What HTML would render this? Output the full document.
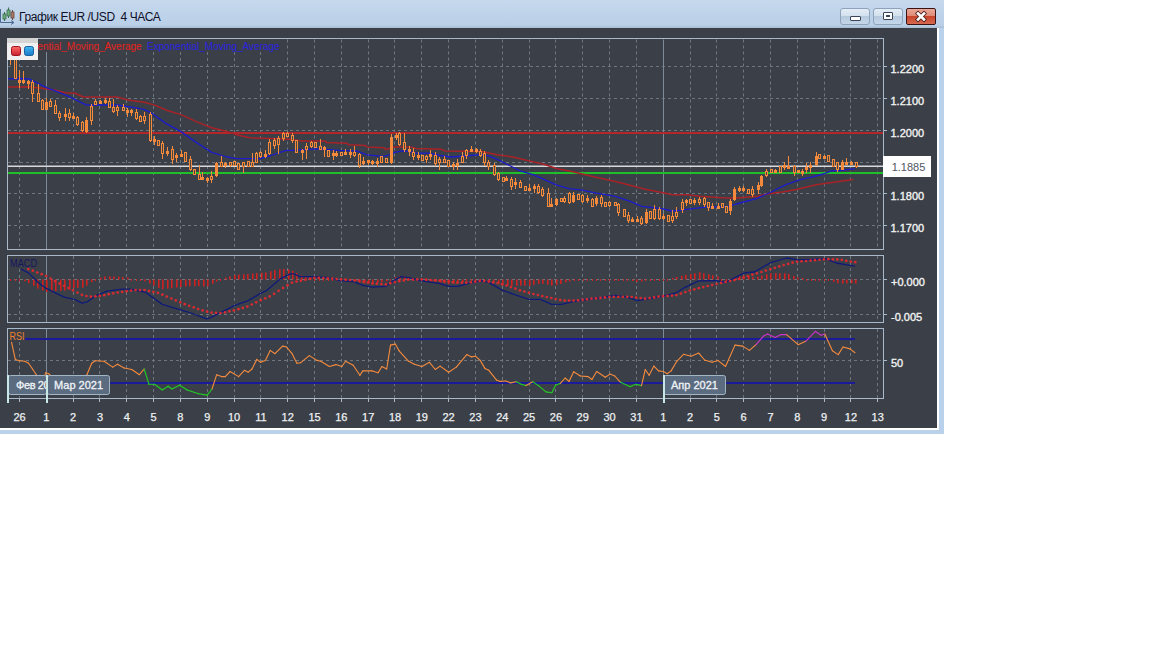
<!DOCTYPE html>
<html><head><meta charset="utf-8">
<style>
html,body{margin:0;padding:0;background:#fff;width:1152px;height:648px;overflow:hidden;font-family:"Liberation Sans",sans-serif;}
#win{position:absolute;left:0;top:0;width:944px;height:434px;background:#b9d1ea;}
#title{position:absolute;left:0;top:0;width:944px;height:28px;background:linear-gradient(#c6d8ec,#b9d0e8 90%,#a9bccf 100%);}
#ttext{position:absolute;left:19px;top:10px;font-size:12px;color:#10102a;white-space:nowrap;letter-spacing:-0.4px;}
#dark{position:absolute;left:0;top:28px;width:937px;height:400px;background:#3b4048;}
#wl{position:absolute;left:937px;top:28px;width:2px;height:402px;background:#fff;}
#bl{position:absolute;left:0;top:428px;width:939px;height:2px;background:#fff;}
.btn{position:absolute;top:8px;width:28px;height:15px;border:1px solid #8ea3ba;border-radius:3px;background:linear-gradient(#e4edf6 0%,#d3e0ee 45%,#b6cadf 50%,#c5d6e8 100%);}
#close{border-color:#3a1414;border-radius:2px;background:linear-gradient(#eaa898 0%,#e08a78 45%,#c9442c 50%,#d66a50 100%);}
svg{position:absolute;left:0;top:0;}
</style></head><body>
<div id="win">
<div id="title">
<svg width="16" height="26" style="left:0;top:0">
<path d="M0.5 9 V22.5 H13" stroke="#4a6a90" stroke-width="1" fill="none"/>
<path d="M11 20.5 L14 22.5 L11 24.5" stroke="#4a6a90" stroke-width="1" fill="none"/>
<line x1="4.5" y1="12" x2="4.5" y2="21" stroke="#3a6a50" stroke-width="1"/><rect x="3" y="14" width="3" height="5" fill="#6cae7a" stroke="#3a6a50" stroke-width="0.8"/>
<line x1="8.5" y1="7.5" x2="8.5" y2="18" stroke="#3a6a50" stroke-width="1"/><rect x="7" y="10" width="3" height="6" fill="#6cae7a" stroke="#3a6a50" stroke-width="0.8"/>
<line x1="12.5" y1="10" x2="12.5" y2="20" stroke="#6a4a40" stroke-width="1"/><rect x="11" y="12" width="3" height="6" fill="#a8786a" stroke="#6a4a40" stroke-width="0.8"/>
</svg>
<div id="ttext">График EUR /USD&nbsp; 4 ЧАСА</div>
<div class="btn" style="left:840px"><div style="position:absolute;left:9px;top:7px;width:9px;height:3px;background:#fff;border:1px solid #3a4658;border-radius:1px"></div></div>
<div class="btn" style="left:873px"><div style="position:absolute;left:9px;top:3px;width:8px;height:6px;background:#fff;border:1px solid #3a4658;border-radius:1px"><div style="position:absolute;left:2px;top:2px;width:4px;height:2px;background:#3a4658"></div></div></div>
<div class="btn" id="close" style="left:906px">
<svg width="28" height="15" style="left:0;top:0"><path d="M11 4.5 L17 10.5 M17 4.5 L11 10.5" stroke="#4a2020" stroke-width="4.2" stroke-linecap="square"/><path d="M11 4.5 L17 10.5 M17 4.5 L11 10.5" stroke="#ffffff" stroke-width="2.6" stroke-linecap="square"/></svg>
</div>
</div>
<div id="dark"></div><div id="wl"></div><div id="bl"></div>
</div>
<svg width="1152" height="648" viewBox="0 0 1152 648" font-family="Liberation Sans, sans-serif">
<line x1="8" y1="66.5" x2="883" y2="66.5" stroke="#6e767f" stroke-width="1" stroke-dasharray="3 3"/>
<line x1="8" y1="98.5" x2="883" y2="98.5" stroke="#6e767f" stroke-width="1" stroke-dasharray="3 3"/>
<line x1="8" y1="130.5" x2="883" y2="130.5" stroke="#6e767f" stroke-width="1" stroke-dasharray="3 3"/>
<line x1="8" y1="162.5" x2="883" y2="162.5" stroke="#6e767f" stroke-width="1" stroke-dasharray="3 3"/>
<line x1="8" y1="193.5" x2="883" y2="193.5" stroke="#6e767f" stroke-width="1" stroke-dasharray="3 3"/>
<line x1="8" y1="225.5" x2="883" y2="225.5" stroke="#6e767f" stroke-width="1" stroke-dasharray="3 3"/>
<line x1="8" y1="279.5" x2="883" y2="279.5" stroke="#6e767f" stroke-width="1" stroke-dasharray="3 3"/>
<line x1="8" y1="314.5" x2="883" y2="314.5" stroke="#6e767f" stroke-width="1" stroke-dasharray="3 3"/>
<line x1="8" y1="360.5" x2="883" y2="360.5" stroke="#6e767f" stroke-width="1" stroke-dasharray="3 3"/>
<line x1="19.5" y1="52" x2="19.5" y2="249.0" stroke="#6e767f" stroke-width="1" stroke-dasharray="3 3"/>
<line x1="19.5" y1="269" x2="19.5" y2="322.0" stroke="#6e767f" stroke-width="1" stroke-dasharray="3 3"/>
<line x1="19.5" y1="342" x2="19.5" y2="398.0" stroke="#6e767f" stroke-width="1" stroke-dasharray="3 3"/>
<line x1="46.5" y1="52" x2="46.5" y2="249.0" stroke="#7d8b99" stroke-width="1"/>
<line x1="46.5" y1="256.0" x2="46.5" y2="322.0" stroke="#7d8b99" stroke-width="1"/>
<line x1="46.5" y1="329.0" x2="46.5" y2="398.0" stroke="#7d8b99" stroke-width="1"/>
<line x1="73.5" y1="52" x2="73.5" y2="249.0" stroke="#6e767f" stroke-width="1" stroke-dasharray="3 3"/>
<line x1="73.5" y1="256.0" x2="73.5" y2="322.0" stroke="#6e767f" stroke-width="1" stroke-dasharray="3 3"/>
<line x1="73.5" y1="329.0" x2="73.5" y2="398.0" stroke="#6e767f" stroke-width="1" stroke-dasharray="3 3"/>
<line x1="99.5" y1="52" x2="99.5" y2="249.0" stroke="#6e767f" stroke-width="1" stroke-dasharray="3 3"/>
<line x1="99.5" y1="256.0" x2="99.5" y2="322.0" stroke="#6e767f" stroke-width="1" stroke-dasharray="3 3"/>
<line x1="99.5" y1="329.0" x2="99.5" y2="398.0" stroke="#6e767f" stroke-width="1" stroke-dasharray="3 3"/>
<line x1="126.5" y1="52" x2="126.5" y2="249.0" stroke="#6e767f" stroke-width="1" stroke-dasharray="3 3"/>
<line x1="126.5" y1="256.0" x2="126.5" y2="322.0" stroke="#6e767f" stroke-width="1" stroke-dasharray="3 3"/>
<line x1="126.5" y1="329.0" x2="126.5" y2="398.0" stroke="#6e767f" stroke-width="1" stroke-dasharray="3 3"/>
<line x1="153.5" y1="52" x2="153.5" y2="249.0" stroke="#6e767f" stroke-width="1" stroke-dasharray="3 3"/>
<line x1="153.5" y1="256.0" x2="153.5" y2="322.0" stroke="#6e767f" stroke-width="1" stroke-dasharray="3 3"/>
<line x1="153.5" y1="329.0" x2="153.5" y2="398.0" stroke="#6e767f" stroke-width="1" stroke-dasharray="3 3"/>
<line x1="180.5" y1="52" x2="180.5" y2="249.0" stroke="#6e767f" stroke-width="1" stroke-dasharray="3 3"/>
<line x1="180.5" y1="256.0" x2="180.5" y2="322.0" stroke="#6e767f" stroke-width="1" stroke-dasharray="3 3"/>
<line x1="180.5" y1="329.0" x2="180.5" y2="398.0" stroke="#6e767f" stroke-width="1" stroke-dasharray="3 3"/>
<line x1="207.5" y1="52" x2="207.5" y2="249.0" stroke="#6e767f" stroke-width="1" stroke-dasharray="3 3"/>
<line x1="207.5" y1="256.0" x2="207.5" y2="322.0" stroke="#6e767f" stroke-width="1" stroke-dasharray="3 3"/>
<line x1="207.5" y1="329.0" x2="207.5" y2="398.0" stroke="#6e767f" stroke-width="1" stroke-dasharray="3 3"/>
<line x1="234.5" y1="52" x2="234.5" y2="249.0" stroke="#6e767f" stroke-width="1" stroke-dasharray="3 3"/>
<line x1="234.5" y1="256.0" x2="234.5" y2="322.0" stroke="#6e767f" stroke-width="1" stroke-dasharray="3 3"/>
<line x1="234.5" y1="329.0" x2="234.5" y2="398.0" stroke="#6e767f" stroke-width="1" stroke-dasharray="3 3"/>
<line x1="260.5" y1="52" x2="260.5" y2="249.0" stroke="#6e767f" stroke-width="1" stroke-dasharray="3 3"/>
<line x1="260.5" y1="256.0" x2="260.5" y2="322.0" stroke="#6e767f" stroke-width="1" stroke-dasharray="3 3"/>
<line x1="260.5" y1="329.0" x2="260.5" y2="398.0" stroke="#6e767f" stroke-width="1" stroke-dasharray="3 3"/>
<line x1="287.5" y1="39.5" x2="287.5" y2="249.0" stroke="#6e767f" stroke-width="1" stroke-dasharray="3 3"/>
<line x1="287.5" y1="256.0" x2="287.5" y2="322.0" stroke="#6e767f" stroke-width="1" stroke-dasharray="3 3"/>
<line x1="287.5" y1="329.0" x2="287.5" y2="398.0" stroke="#6e767f" stroke-width="1" stroke-dasharray="3 3"/>
<line x1="314.5" y1="39.5" x2="314.5" y2="249.0" stroke="#6e767f" stroke-width="1" stroke-dasharray="3 3"/>
<line x1="314.5" y1="256.0" x2="314.5" y2="322.0" stroke="#6e767f" stroke-width="1" stroke-dasharray="3 3"/>
<line x1="314.5" y1="329.0" x2="314.5" y2="398.0" stroke="#6e767f" stroke-width="1" stroke-dasharray="3 3"/>
<line x1="341.5" y1="39.5" x2="341.5" y2="249.0" stroke="#6e767f" stroke-width="1" stroke-dasharray="3 3"/>
<line x1="341.5" y1="256.0" x2="341.5" y2="322.0" stroke="#6e767f" stroke-width="1" stroke-dasharray="3 3"/>
<line x1="341.5" y1="329.0" x2="341.5" y2="398.0" stroke="#6e767f" stroke-width="1" stroke-dasharray="3 3"/>
<line x1="368.5" y1="39.5" x2="368.5" y2="249.0" stroke="#6e767f" stroke-width="1" stroke-dasharray="3 3"/>
<line x1="368.5" y1="256.0" x2="368.5" y2="322.0" stroke="#6e767f" stroke-width="1" stroke-dasharray="3 3"/>
<line x1="368.5" y1="329.0" x2="368.5" y2="398.0" stroke="#6e767f" stroke-width="1" stroke-dasharray="3 3"/>
<line x1="394.5" y1="39.5" x2="394.5" y2="249.0" stroke="#6e767f" stroke-width="1" stroke-dasharray="3 3"/>
<line x1="394.5" y1="256.0" x2="394.5" y2="322.0" stroke="#6e767f" stroke-width="1" stroke-dasharray="3 3"/>
<line x1="394.5" y1="329.0" x2="394.5" y2="398.0" stroke="#6e767f" stroke-width="1" stroke-dasharray="3 3"/>
<line x1="421.5" y1="39.5" x2="421.5" y2="249.0" stroke="#6e767f" stroke-width="1" stroke-dasharray="3 3"/>
<line x1="421.5" y1="256.0" x2="421.5" y2="322.0" stroke="#6e767f" stroke-width="1" stroke-dasharray="3 3"/>
<line x1="421.5" y1="329.0" x2="421.5" y2="398.0" stroke="#6e767f" stroke-width="1" stroke-dasharray="3 3"/>
<line x1="448.5" y1="39.5" x2="448.5" y2="249.0" stroke="#6e767f" stroke-width="1" stroke-dasharray="3 3"/>
<line x1="448.5" y1="256.0" x2="448.5" y2="322.0" stroke="#6e767f" stroke-width="1" stroke-dasharray="3 3"/>
<line x1="448.5" y1="329.0" x2="448.5" y2="398.0" stroke="#6e767f" stroke-width="1" stroke-dasharray="3 3"/>
<line x1="475.5" y1="39.5" x2="475.5" y2="249.0" stroke="#6e767f" stroke-width="1" stroke-dasharray="3 3"/>
<line x1="475.5" y1="256.0" x2="475.5" y2="322.0" stroke="#6e767f" stroke-width="1" stroke-dasharray="3 3"/>
<line x1="475.5" y1="329.0" x2="475.5" y2="398.0" stroke="#6e767f" stroke-width="1" stroke-dasharray="3 3"/>
<line x1="502.5" y1="39.5" x2="502.5" y2="249.0" stroke="#6e767f" stroke-width="1" stroke-dasharray="3 3"/>
<line x1="502.5" y1="256.0" x2="502.5" y2="322.0" stroke="#6e767f" stroke-width="1" stroke-dasharray="3 3"/>
<line x1="502.5" y1="329.0" x2="502.5" y2="398.0" stroke="#6e767f" stroke-width="1" stroke-dasharray="3 3"/>
<line x1="529.5" y1="39.5" x2="529.5" y2="249.0" stroke="#6e767f" stroke-width="1" stroke-dasharray="3 3"/>
<line x1="529.5" y1="256.0" x2="529.5" y2="322.0" stroke="#6e767f" stroke-width="1" stroke-dasharray="3 3"/>
<line x1="529.5" y1="329.0" x2="529.5" y2="398.0" stroke="#6e767f" stroke-width="1" stroke-dasharray="3 3"/>
<line x1="555.5" y1="39.5" x2="555.5" y2="249.0" stroke="#6e767f" stroke-width="1" stroke-dasharray="3 3"/>
<line x1="555.5" y1="256.0" x2="555.5" y2="322.0" stroke="#6e767f" stroke-width="1" stroke-dasharray="3 3"/>
<line x1="555.5" y1="329.0" x2="555.5" y2="398.0" stroke="#6e767f" stroke-width="1" stroke-dasharray="3 3"/>
<line x1="582.5" y1="39.5" x2="582.5" y2="249.0" stroke="#6e767f" stroke-width="1" stroke-dasharray="3 3"/>
<line x1="582.5" y1="256.0" x2="582.5" y2="322.0" stroke="#6e767f" stroke-width="1" stroke-dasharray="3 3"/>
<line x1="582.5" y1="329.0" x2="582.5" y2="398.0" stroke="#6e767f" stroke-width="1" stroke-dasharray="3 3"/>
<line x1="609.5" y1="39.5" x2="609.5" y2="249.0" stroke="#6e767f" stroke-width="1" stroke-dasharray="3 3"/>
<line x1="609.5" y1="256.0" x2="609.5" y2="322.0" stroke="#6e767f" stroke-width="1" stroke-dasharray="3 3"/>
<line x1="609.5" y1="329.0" x2="609.5" y2="398.0" stroke="#6e767f" stroke-width="1" stroke-dasharray="3 3"/>
<line x1="636.5" y1="39.5" x2="636.5" y2="249.0" stroke="#6e767f" stroke-width="1" stroke-dasharray="3 3"/>
<line x1="636.5" y1="256.0" x2="636.5" y2="322.0" stroke="#6e767f" stroke-width="1" stroke-dasharray="3 3"/>
<line x1="636.5" y1="329.0" x2="636.5" y2="398.0" stroke="#6e767f" stroke-width="1" stroke-dasharray="3 3"/>
<line x1="663.5" y1="39.5" x2="663.5" y2="249.0" stroke="#7d8b99" stroke-width="1"/>
<line x1="663.5" y1="256.0" x2="663.5" y2="322.0" stroke="#7d8b99" stroke-width="1"/>
<line x1="663.5" y1="329.0" x2="663.5" y2="398.0" stroke="#7d8b99" stroke-width="1"/>
<line x1="690.5" y1="39.5" x2="690.5" y2="249.0" stroke="#6e767f" stroke-width="1" stroke-dasharray="3 3"/>
<line x1="690.5" y1="256.0" x2="690.5" y2="322.0" stroke="#6e767f" stroke-width="1" stroke-dasharray="3 3"/>
<line x1="690.5" y1="329.0" x2="690.5" y2="398.0" stroke="#6e767f" stroke-width="1" stroke-dasharray="3 3"/>
<line x1="716.5" y1="39.5" x2="716.5" y2="249.0" stroke="#6e767f" stroke-width="1" stroke-dasharray="3 3"/>
<line x1="716.5" y1="256.0" x2="716.5" y2="322.0" stroke="#6e767f" stroke-width="1" stroke-dasharray="3 3"/>
<line x1="716.5" y1="329.0" x2="716.5" y2="398.0" stroke="#6e767f" stroke-width="1" stroke-dasharray="3 3"/>
<line x1="743.5" y1="39.5" x2="743.5" y2="249.0" stroke="#6e767f" stroke-width="1" stroke-dasharray="3 3"/>
<line x1="743.5" y1="256.0" x2="743.5" y2="322.0" stroke="#6e767f" stroke-width="1" stroke-dasharray="3 3"/>
<line x1="743.5" y1="329.0" x2="743.5" y2="398.0" stroke="#6e767f" stroke-width="1" stroke-dasharray="3 3"/>
<line x1="770.5" y1="39.5" x2="770.5" y2="249.0" stroke="#6e767f" stroke-width="1" stroke-dasharray="3 3"/>
<line x1="770.5" y1="256.0" x2="770.5" y2="322.0" stroke="#6e767f" stroke-width="1" stroke-dasharray="3 3"/>
<line x1="770.5" y1="329.0" x2="770.5" y2="398.0" stroke="#6e767f" stroke-width="1" stroke-dasharray="3 3"/>
<line x1="797.5" y1="39.5" x2="797.5" y2="249.0" stroke="#6e767f" stroke-width="1" stroke-dasharray="3 3"/>
<line x1="797.5" y1="256.0" x2="797.5" y2="322.0" stroke="#6e767f" stroke-width="1" stroke-dasharray="3 3"/>
<line x1="797.5" y1="329.0" x2="797.5" y2="398.0" stroke="#6e767f" stroke-width="1" stroke-dasharray="3 3"/>
<line x1="824.5" y1="39.5" x2="824.5" y2="249.0" stroke="#6e767f" stroke-width="1" stroke-dasharray="3 3"/>
<line x1="824.5" y1="256.0" x2="824.5" y2="322.0" stroke="#6e767f" stroke-width="1" stroke-dasharray="3 3"/>
<line x1="824.5" y1="329.0" x2="824.5" y2="398.0" stroke="#6e767f" stroke-width="1" stroke-dasharray="3 3"/>
<line x1="850.5" y1="39.5" x2="850.5" y2="249.0" stroke="#6e767f" stroke-width="1" stroke-dasharray="3 3"/>
<line x1="850.5" y1="256.0" x2="850.5" y2="322.0" stroke="#6e767f" stroke-width="1" stroke-dasharray="3 3"/>
<line x1="850.5" y1="329.0" x2="850.5" y2="398.0" stroke="#6e767f" stroke-width="1" stroke-dasharray="3 3"/>
<line x1="877.5" y1="39.5" x2="877.5" y2="249.0" stroke="#6e767f" stroke-width="1" stroke-dasharray="3 3"/>
<line x1="877.5" y1="256.0" x2="877.5" y2="322.0" stroke="#6e767f" stroke-width="1" stroke-dasharray="3 3"/>
<line x1="877.5" y1="329.0" x2="877.5" y2="398.0" stroke="#6e767f" stroke-width="1" stroke-dasharray="3 3"/>
<rect x="8" y="132" width="875" height="2" fill="#b3262a"/>
<rect x="8" y="165.5" width="875" height="1.5" fill="#d8d8d8"/>
<rect x="8" y="172" width="875" height="2" fill="#1fbf2a"/>
<polyline points="8.0,87.1 29.0,86.8 41.7,88.3 55.4,90.2 65.3,92.7 75.0,93.3 83.3,97.0 95.8,97.0 116.7,97.0 129.4,100.2 144.2,102.2 154.0,104.9 166.7,110.2 180.9,114.6 196.3,121.6 211.7,127.7 227.2,131.6 239.5,135.5 250.0,137.8 270.9,138.5 289.4,139.3 301.7,140.9 324.9,140.9 326.4,142.4 347.0,143.2 348.5,144.7 365.5,145.5 367.0,147.0 384.0,147.8 385.6,149.4 394.8,147.0 410.2,147.0 416.4,148.6 441.6,149.3 444.7,150.9 481.7,151.6 497.2,154.7 512.6,157.0 525.4,160.0 545.5,164.7 556.3,168.5 571.7,171.6 582.5,174.0 594.9,177.0 615.4,181.6 630.9,185.5 646.3,189.4 661.7,192.4 672.5,194.8 686.4,194.8 700.0,196.3 725.5,197.9 736.3,197.9 757.9,196.3 767.2,194.0 782.6,192.0 796.2,189.4 816.3,184.8 831.7,182.5 853.3,179.4" fill="none" stroke="#a82228" stroke-width="1.5" stroke-linejoin="round" />
<polyline points="8.0,78.8 19.0,78.5 29.0,78.8 46.7,87.7 61.5,93.3 74.0,98.8 80.0,101.9 86.2,104.9 96.0,105.0 117.0,105.0 133.0,107.4 144.0,109.3 150.4,112.3 165.4,123.1 180.9,131.6 196.3,142.4 211.7,152.4 227.2,157.0 236.4,158.6 260.0,158.6 270.9,155.5 286.3,150.4 292.5,150.4 317.2,148.9 340.0,150.4 356.2,150.9 367.0,154.8 384.0,156.3 391.7,154.0 394.8,152.4 402.5,150.9 410.2,151.7 416.4,153.2 429.3,153.2 440.0,155.5 450.9,157.0 470.9,155.5 481.7,154.7 489.4,156.2 497.2,159.4 509.5,165.5 520.0,170.9 533.1,174.7 545.5,180.1 556.3,184.8 568.6,188.6 582.5,190.2 596.4,193.2 615.4,196.3 630.9,201.7 641.7,206.3 661.7,208.6 672.5,211.0 681.8,210.2 692.6,208.6 705.4,207.1 728.6,206.4 736.3,204.0 756.4,198.6 770.2,192.5 785.4,184.8 800.9,179.4 811.7,177.1 823.2,174.0 831.7,170.9 844.0,170.1 855.0,168.6" fill="none" stroke="#1c1ccc" stroke-width="1.3" stroke-linejoin="round" />
<rect x="7" y="55" width="1" height="9" fill="#f58a3d"/>
<rect x="10" y="55" width="1" height="10" fill="#f58a3d"/>
<rect x="15" y="50" width="1" height="29" fill="#f58a3d"/>
<rect x="14" y="55" width="3" height="24" fill="#f58a3d"/>
<rect x="15" y="56" width="1" height="22" fill="#4a4640"/>
<rect x="19" y="70" width="1" height="18" fill="#f58a3d"/>
<rect x="18" y="80" width="3" height="3" fill="#f58a3d"/>
<rect x="23" y="71" width="1" height="13" fill="#f58a3d"/>
<rect x="22" y="80" width="3" height="3" fill="#f58a3d"/>
<rect x="28" y="80" width="1" height="9" fill="#f58a3d"/>
<rect x="27" y="81" width="3" height="3" fill="#f58a3d"/>
<rect x="32" y="80" width="1" height="22" fill="#f58a3d"/>
<rect x="31" y="82" width="3" height="12" fill="#f58a3d"/>
<rect x="32" y="83" width="1" height="10" fill="#4a4640"/>
<rect x="38" y="84" width="1" height="18" fill="#f58a3d"/>
<rect x="37" y="93" width="3" height="9" fill="#f58a3d"/>
<rect x="38" y="94" width="1" height="7" fill="#4a4640"/>
<rect x="42" y="99" width="1" height="11" fill="#f58a3d"/>
<rect x="41" y="100" width="3" height="10" fill="#f58a3d"/>
<rect x="42" y="101" width="1" height="8" fill="#4a4640"/>
<rect x="46" y="98" width="1" height="12" fill="#f58a3d"/>
<rect x="45" y="102" width="3" height="8" fill="#f58a3d"/>
<rect x="50" y="99" width="1" height="8" fill="#f58a3d"/>
<rect x="49" y="101" width="3" height="6" fill="#f58a3d"/>
<rect x="50" y="102" width="1" height="4" fill="#4a4640"/>
<rect x="55" y="100" width="1" height="14" fill="#f58a3d"/>
<rect x="54" y="105" width="3" height="9" fill="#f58a3d"/>
<rect x="55" y="106" width="1" height="7" fill="#4a4640"/>
<rect x="59" y="111" width="1" height="10" fill="#f58a3d"/>
<rect x="58" y="113" width="3" height="5" fill="#f58a3d"/>
<rect x="59" y="114" width="1" height="3" fill="#4a4640"/>
<rect x="65" y="108" width="1" height="13" fill="#f58a3d"/>
<rect x="64" y="114" width="3" height="3" fill="#f58a3d"/>
<rect x="69" y="109" width="1" height="12" fill="#f58a3d"/>
<rect x="68" y="113" width="3" height="5" fill="#f58a3d"/>
<rect x="69" y="114" width="1" height="3" fill="#4a4640"/>
<rect x="73" y="113" width="1" height="6" fill="#f58a3d"/>
<rect x="72" y="116" width="3" height="3" fill="#f58a3d"/>
<rect x="77" y="116" width="1" height="10" fill="#f58a3d"/>
<rect x="76" y="117" width="3" height="8" fill="#f58a3d"/>
<rect x="77" y="118" width="1" height="6" fill="#4a4640"/>
<rect x="82" y="121" width="1" height="11" fill="#f58a3d"/>
<rect x="81" y="122" width="3" height="9" fill="#f58a3d"/>
<rect x="82" y="123" width="1" height="7" fill="#4a4640"/>
<rect x="86" y="117" width="1" height="16" fill="#f58a3d"/>
<rect x="85" y="120" width="3" height="12" fill="#f58a3d"/>
<rect x="91" y="104" width="1" height="21" fill="#f58a3d"/>
<rect x="90" y="106" width="3" height="15" fill="#f58a3d"/>
<rect x="91" y="107" width="1" height="13" fill="#4a4640"/>
<rect x="95" y="99" width="1" height="6" fill="#f58a3d"/>
<rect x="94" y="101" width="3" height="4" fill="#f58a3d"/>
<rect x="95" y="102" width="1" height="2" fill="#4a4640"/>
<rect x="100" y="100" width="1" height="4" fill="#f58a3d"/>
<rect x="99" y="101" width="3" height="3" fill="#f58a3d"/>
<rect x="105" y="98" width="1" height="6" fill="#f58a3d"/>
<rect x="104" y="100" width="3" height="3" fill="#f58a3d"/>
<rect x="109" y="98" width="1" height="10" fill="#f58a3d"/>
<rect x="108" y="101" width="3" height="7" fill="#f58a3d"/>
<rect x="109" y="102" width="1" height="5" fill="#4a4640"/>
<rect x="113" y="99" width="1" height="14" fill="#f58a3d"/>
<rect x="112" y="107" width="3" height="5" fill="#f58a3d"/>
<rect x="113" y="108" width="1" height="3" fill="#4a4640"/>
<rect x="117" y="105" width="1" height="11" fill="#f58a3d"/>
<rect x="116" y="107" width="3" height="4" fill="#f58a3d"/>
<rect x="117" y="108" width="1" height="2" fill="#4a4640"/>
<rect x="123" y="104" width="1" height="7" fill="#f58a3d"/>
<rect x="122" y="107" width="3" height="4" fill="#f58a3d"/>
<rect x="123" y="108" width="1" height="2" fill="#4a4640"/>
<rect x="127" y="108" width="1" height="9" fill="#f58a3d"/>
<rect x="126" y="110" width="3" height="3" fill="#f58a3d"/>
<rect x="131" y="109" width="1" height="7" fill="#f58a3d"/>
<rect x="130" y="110" width="3" height="3" fill="#f58a3d"/>
<rect x="136" y="109" width="1" height="11" fill="#f58a3d"/>
<rect x="135" y="112" width="3" height="7" fill="#f58a3d"/>
<rect x="136" y="113" width="1" height="5" fill="#4a4640"/>
<rect x="140" y="115" width="1" height="7" fill="#f58a3d"/>
<rect x="139" y="116" width="3" height="6" fill="#f58a3d"/>
<rect x="140" y="117" width="1" height="4" fill="#4a4640"/>
<rect x="144" y="112" width="1" height="12" fill="#f58a3d"/>
<rect x="143" y="116" width="3" height="5" fill="#f58a3d"/>
<rect x="144" y="117" width="1" height="3" fill="#4a4640"/>
<rect x="150" y="112" width="1" height="30" fill="#f58a3d"/>
<rect x="149" y="114" width="3" height="27" fill="#f58a3d"/>
<rect x="150" y="115" width="1" height="25" fill="#4a4640"/>
<rect x="154" y="136" width="1" height="9" fill="#f58a3d"/>
<rect x="153" y="139" width="3" height="3" fill="#f58a3d"/>
<rect x="158" y="140" width="1" height="6" fill="#f58a3d"/>
<rect x="157" y="140" width="3" height="6" fill="#f58a3d"/>
<rect x="158" y="141" width="1" height="4" fill="#4a4640"/>
<rect x="162" y="141" width="1" height="18" fill="#f58a3d"/>
<rect x="161" y="143" width="3" height="11" fill="#f58a3d"/>
<rect x="162" y="144" width="1" height="9" fill="#4a4640"/>
<rect x="167" y="147" width="1" height="9" fill="#f58a3d"/>
<rect x="166" y="151" width="3" height="3" fill="#f58a3d"/>
<rect x="172" y="146" width="1" height="18" fill="#f58a3d"/>
<rect x="171" y="149" width="3" height="11" fill="#f58a3d"/>
<rect x="172" y="150" width="1" height="9" fill="#4a4640"/>
<rect x="176" y="153" width="1" height="9" fill="#f58a3d"/>
<rect x="175" y="155" width="3" height="3" fill="#f58a3d"/>
<rect x="181" y="150" width="1" height="7" fill="#f58a3d"/>
<rect x="180" y="154" width="3" height="3" fill="#f58a3d"/>
<rect x="185" y="152" width="1" height="10" fill="#f58a3d"/>
<rect x="184" y="152" width="3" height="10" fill="#f58a3d"/>
<rect x="185" y="153" width="1" height="8" fill="#4a4640"/>
<rect x="190" y="156" width="1" height="15" fill="#f58a3d"/>
<rect x="189" y="159" width="3" height="11" fill="#f58a3d"/>
<rect x="190" y="160" width="1" height="9" fill="#4a4640"/>
<rect x="194" y="169" width="1" height="6" fill="#f58a3d"/>
<rect x="193" y="169" width="3" height="6" fill="#f58a3d"/>
<rect x="194" y="170" width="1" height="4" fill="#4a4640"/>
<rect x="199" y="165" width="1" height="15" fill="#f58a3d"/>
<rect x="198" y="174" width="3" height="6" fill="#f58a3d"/>
<rect x="199" y="175" width="1" height="4" fill="#4a4640"/>
<rect x="202" y="172" width="1" height="8" fill="#f58a3d"/>
<rect x="201" y="177" width="3" height="3" fill="#f58a3d"/>
<rect x="207" y="177" width="1" height="6" fill="#f58a3d"/>
<rect x="206" y="178" width="3" height="3" fill="#f58a3d"/>
<rect x="211" y="171" width="1" height="12" fill="#f58a3d"/>
<rect x="210" y="176" width="3" height="4" fill="#f58a3d"/>
<rect x="211" y="177" width="1" height="2" fill="#4a4640"/>
<rect x="216" y="162" width="1" height="15" fill="#f58a3d"/>
<rect x="215" y="163" width="3" height="13" fill="#f58a3d"/>
<rect x="221" y="156" width="1" height="11" fill="#f58a3d"/>
<rect x="220" y="162" width="3" height="5" fill="#f58a3d"/>
<rect x="221" y="163" width="1" height="3" fill="#4a4640"/>
<rect x="225" y="162" width="1" height="6" fill="#f58a3d"/>
<rect x="224" y="163" width="3" height="3" fill="#f58a3d"/>
<rect x="230" y="162" width="1" height="5" fill="#f58a3d"/>
<rect x="229" y="162" width="3" height="4" fill="#f58a3d"/>
<rect x="230" y="163" width="1" height="2" fill="#4a4640"/>
<rect x="234" y="161" width="1" height="5" fill="#f58a3d"/>
<rect x="233" y="161" width="3" height="5" fill="#f58a3d"/>
<rect x="234" y="162" width="1" height="3" fill="#4a4640"/>
<rect x="238" y="163" width="1" height="7" fill="#f58a3d"/>
<rect x="237" y="163" width="3" height="7" fill="#f58a3d"/>
<rect x="238" y="164" width="1" height="5" fill="#4a4640"/>
<rect x="243" y="162" width="1" height="11" fill="#f58a3d"/>
<rect x="242" y="162" width="3" height="5" fill="#f58a3d"/>
<rect x="243" y="163" width="1" height="3" fill="#4a4640"/>
<rect x="248" y="161" width="1" height="6" fill="#f58a3d"/>
<rect x="247" y="161" width="3" height="6" fill="#f58a3d"/>
<rect x="248" y="162" width="1" height="4" fill="#4a4640"/>
<rect x="252" y="153" width="1" height="14" fill="#f58a3d"/>
<rect x="251" y="162" width="3" height="5" fill="#f58a3d"/>
<rect x="252" y="163" width="1" height="3" fill="#4a4640"/>
<rect x="256" y="152" width="1" height="11" fill="#f58a3d"/>
<rect x="255" y="153" width="3" height="10" fill="#f58a3d"/>
<rect x="256" y="154" width="1" height="8" fill="#4a4640"/>
<rect x="260" y="151" width="1" height="7" fill="#f58a3d"/>
<rect x="259" y="152" width="3" height="5" fill="#f58a3d"/>
<rect x="260" y="153" width="1" height="3" fill="#4a4640"/>
<rect x="265" y="150" width="1" height="8" fill="#f58a3d"/>
<rect x="264" y="154" width="3" height="3" fill="#f58a3d"/>
<rect x="269" y="139" width="1" height="16" fill="#f58a3d"/>
<rect x="268" y="142" width="3" height="12" fill="#f58a3d"/>
<rect x="269" y="143" width="1" height="10" fill="#4a4640"/>
<rect x="274" y="138" width="1" height="11" fill="#f58a3d"/>
<rect x="273" y="140" width="3" height="6" fill="#f58a3d"/>
<rect x="274" y="141" width="1" height="4" fill="#4a4640"/>
<rect x="278" y="136" width="1" height="18" fill="#f58a3d"/>
<rect x="277" y="138" width="3" height="7" fill="#f58a3d"/>
<rect x="278" y="139" width="1" height="5" fill="#4a4640"/>
<rect x="283" y="132" width="1" height="9" fill="#f58a3d"/>
<rect x="282" y="133" width="3" height="6" fill="#f58a3d"/>
<rect x="283" y="134" width="1" height="4" fill="#4a4640"/>
<rect x="287" y="132" width="1" height="5" fill="#f58a3d"/>
<rect x="286" y="133" width="3" height="4" fill="#f58a3d"/>
<rect x="287" y="134" width="1" height="2" fill="#4a4640"/>
<rect x="292" y="133" width="1" height="10" fill="#f58a3d"/>
<rect x="291" y="135" width="3" height="6" fill="#f58a3d"/>
<rect x="292" y="136" width="1" height="4" fill="#4a4640"/>
<rect x="296" y="140" width="1" height="13" fill="#f58a3d"/>
<rect x="295" y="140" width="3" height="13" fill="#f58a3d"/>
<rect x="296" y="141" width="1" height="11" fill="#4a4640"/>
<rect x="302" y="149" width="1" height="11" fill="#f58a3d"/>
<rect x="301" y="150" width="3" height="3" fill="#f58a3d"/>
<rect x="306" y="143" width="1" height="16" fill="#f58a3d"/>
<rect x="305" y="146" width="3" height="4" fill="#f58a3d"/>
<rect x="306" y="147" width="1" height="2" fill="#4a4640"/>
<rect x="311" y="141" width="1" height="7" fill="#f58a3d"/>
<rect x="310" y="142" width="3" height="5" fill="#f58a3d"/>
<rect x="311" y="143" width="1" height="3" fill="#4a4640"/>
<rect x="315" y="142" width="1" height="6" fill="#f58a3d"/>
<rect x="314" y="142" width="3" height="6" fill="#f58a3d"/>
<rect x="315" y="143" width="1" height="4" fill="#4a4640"/>
<rect x="320" y="139" width="1" height="11" fill="#f58a3d"/>
<rect x="319" y="146" width="3" height="4" fill="#f58a3d"/>
<rect x="320" y="147" width="1" height="2" fill="#4a4640"/>
<rect x="324" y="146" width="1" height="11" fill="#f58a3d"/>
<rect x="323" y="147" width="3" height="3" fill="#f58a3d"/>
<rect x="328" y="150" width="1" height="7" fill="#f58a3d"/>
<rect x="327" y="150" width="3" height="7" fill="#f58a3d"/>
<rect x="328" y="151" width="1" height="5" fill="#4a4640"/>
<rect x="333" y="150" width="1" height="10" fill="#f58a3d"/>
<rect x="332" y="153" width="3" height="3" fill="#f58a3d"/>
<rect x="336" y="151" width="1" height="6" fill="#f58a3d"/>
<rect x="335" y="153" width="3" height="3" fill="#f58a3d"/>
<rect x="341" y="152" width="1" height="4" fill="#f58a3d"/>
<rect x="340" y="152" width="3" height="4" fill="#f58a3d"/>
<rect x="341" y="153" width="1" height="2" fill="#4a4640"/>
<rect x="345" y="149" width="1" height="6" fill="#f58a3d"/>
<rect x="344" y="152" width="3" height="3" fill="#f58a3d"/>
<rect x="350" y="149" width="1" height="9" fill="#f58a3d"/>
<rect x="349" y="152" width="3" height="3" fill="#f58a3d"/>
<rect x="354" y="146" width="1" height="11" fill="#f58a3d"/>
<rect x="353" y="152" width="3" height="4" fill="#f58a3d"/>
<rect x="354" y="153" width="1" height="2" fill="#4a4640"/>
<rect x="359" y="153" width="1" height="15" fill="#f58a3d"/>
<rect x="358" y="154" width="3" height="12" fill="#f58a3d"/>
<rect x="359" y="155" width="1" height="10" fill="#4a4640"/>
<rect x="363" y="157" width="1" height="8" fill="#f58a3d"/>
<rect x="362" y="161" width="3" height="3" fill="#f58a3d"/>
<rect x="368" y="160" width="1" height="5" fill="#f58a3d"/>
<rect x="367" y="160" width="3" height="3" fill="#f58a3d"/>
<rect x="372" y="160" width="1" height="5" fill="#f58a3d"/>
<rect x="371" y="161" width="3" height="3" fill="#f58a3d"/>
<rect x="377" y="158" width="1" height="9" fill="#f58a3d"/>
<rect x="376" y="161" width="3" height="3" fill="#f58a3d"/>
<rect x="381" y="156" width="1" height="7" fill="#f58a3d"/>
<rect x="380" y="156" width="3" height="7" fill="#f58a3d"/>
<rect x="381" y="157" width="1" height="5" fill="#4a4640"/>
<rect x="386" y="158" width="1" height="5" fill="#f58a3d"/>
<rect x="385" y="158" width="3" height="5" fill="#f58a3d"/>
<rect x="386" y="159" width="1" height="3" fill="#4a4640"/>
<rect x="391" y="134" width="1" height="30" fill="#f58a3d"/>
<rect x="390" y="137" width="3" height="26" fill="#f58a3d"/>
<rect x="396" y="133" width="1" height="7" fill="#f58a3d"/>
<rect x="395" y="135" width="3" height="3" fill="#f58a3d"/>
<rect x="399" y="132" width="1" height="14" fill="#f58a3d"/>
<rect x="398" y="133" width="3" height="12" fill="#f58a3d"/>
<rect x="399" y="134" width="1" height="10" fill="#4a4640"/>
<rect x="404" y="133" width="1" height="19" fill="#f58a3d"/>
<rect x="403" y="142" width="3" height="8" fill="#f58a3d"/>
<rect x="404" y="143" width="1" height="6" fill="#4a4640"/>
<rect x="409" y="146" width="1" height="10" fill="#f58a3d"/>
<rect x="408" y="149" width="3" height="3" fill="#f58a3d"/>
<rect x="413" y="148" width="1" height="12" fill="#f58a3d"/>
<rect x="412" y="152" width="3" height="5" fill="#f58a3d"/>
<rect x="413" y="153" width="1" height="3" fill="#4a4640"/>
<rect x="418" y="152" width="1" height="8" fill="#f58a3d"/>
<rect x="417" y="155" width="3" height="3" fill="#f58a3d"/>
<rect x="422" y="155" width="1" height="6" fill="#f58a3d"/>
<rect x="421" y="155" width="3" height="6" fill="#f58a3d"/>
<rect x="422" y="156" width="1" height="4" fill="#4a4640"/>
<rect x="426" y="155" width="1" height="8" fill="#f58a3d"/>
<rect x="425" y="156" width="3" height="4" fill="#f58a3d"/>
<rect x="426" y="157" width="1" height="2" fill="#4a4640"/>
<rect x="430" y="150" width="1" height="10" fill="#f58a3d"/>
<rect x="429" y="154" width="3" height="3" fill="#f58a3d"/>
<rect x="435" y="152" width="1" height="14" fill="#f58a3d"/>
<rect x="434" y="155" width="3" height="9" fill="#f58a3d"/>
<rect x="435" y="156" width="1" height="7" fill="#4a4640"/>
<rect x="439" y="157" width="1" height="13" fill="#f58a3d"/>
<rect x="438" y="159" width="3" height="4" fill="#f58a3d"/>
<rect x="439" y="160" width="1" height="2" fill="#4a4640"/>
<rect x="444" y="156" width="1" height="7" fill="#f58a3d"/>
<rect x="443" y="159" width="3" height="4" fill="#f58a3d"/>
<rect x="444" y="160" width="1" height="2" fill="#4a4640"/>
<rect x="448" y="160" width="1" height="7" fill="#f58a3d"/>
<rect x="447" y="160" width="3" height="7" fill="#f58a3d"/>
<rect x="448" y="161" width="1" height="5" fill="#4a4640"/>
<rect x="453" y="162" width="1" height="8" fill="#f58a3d"/>
<rect x="452" y="164" width="3" height="3" fill="#f58a3d"/>
<rect x="457" y="159" width="1" height="11" fill="#f58a3d"/>
<rect x="456" y="163" width="3" height="3" fill="#f58a3d"/>
<rect x="462" y="152" width="1" height="11" fill="#f58a3d"/>
<rect x="461" y="156" width="3" height="7" fill="#f58a3d"/>
<rect x="462" y="157" width="1" height="5" fill="#4a4640"/>
<rect x="466" y="149" width="1" height="10" fill="#f58a3d"/>
<rect x="465" y="150" width="3" height="6" fill="#f58a3d"/>
<rect x="466" y="151" width="1" height="4" fill="#4a4640"/>
<rect x="471" y="146" width="1" height="5" fill="#f58a3d"/>
<rect x="470" y="149" width="3" height="3" fill="#f58a3d"/>
<rect x="476" y="148" width="1" height="5" fill="#f58a3d"/>
<rect x="475" y="149" width="3" height="3" fill="#f58a3d"/>
<rect x="480" y="149" width="1" height="8" fill="#f58a3d"/>
<rect x="479" y="151" width="3" height="5" fill="#f58a3d"/>
<rect x="480" y="152" width="1" height="3" fill="#4a4640"/>
<rect x="484" y="151" width="1" height="15" fill="#f58a3d"/>
<rect x="483" y="153" width="3" height="10" fill="#f58a3d"/>
<rect x="484" y="154" width="1" height="8" fill="#4a4640"/>
<rect x="488" y="160" width="1" height="10" fill="#f58a3d"/>
<rect x="487" y="162" width="3" height="5" fill="#f58a3d"/>
<rect x="488" y="163" width="1" height="3" fill="#4a4640"/>
<rect x="494" y="163" width="1" height="13" fill="#f58a3d"/>
<rect x="493" y="165" width="3" height="10" fill="#f58a3d"/>
<rect x="494" y="166" width="1" height="8" fill="#4a4640"/>
<rect x="498" y="172" width="1" height="9" fill="#f58a3d"/>
<rect x="497" y="173" width="3" height="7" fill="#f58a3d"/>
<rect x="498" y="174" width="1" height="5" fill="#4a4640"/>
<rect x="503" y="177" width="1" height="5" fill="#f58a3d"/>
<rect x="502" y="177" width="3" height="5" fill="#f58a3d"/>
<rect x="503" y="178" width="1" height="3" fill="#4a4640"/>
<rect x="506" y="176" width="1" height="5" fill="#f58a3d"/>
<rect x="505" y="178" width="3" height="3" fill="#f58a3d"/>
<rect x="511" y="177" width="1" height="13" fill="#f58a3d"/>
<rect x="510" y="179" width="3" height="8" fill="#f58a3d"/>
<rect x="511" y="180" width="1" height="6" fill="#4a4640"/>
<rect x="515" y="178" width="1" height="11" fill="#f58a3d"/>
<rect x="514" y="182" width="3" height="3" fill="#f58a3d"/>
<rect x="520" y="180" width="1" height="8" fill="#f58a3d"/>
<rect x="519" y="182" width="3" height="6" fill="#f58a3d"/>
<rect x="520" y="183" width="1" height="4" fill="#4a4640"/>
<rect x="525" y="186" width="1" height="5" fill="#f58a3d"/>
<rect x="524" y="186" width="3" height="5" fill="#f58a3d"/>
<rect x="525" y="187" width="1" height="3" fill="#4a4640"/>
<rect x="529" y="184" width="1" height="7" fill="#f58a3d"/>
<rect x="528" y="188" width="3" height="3" fill="#f58a3d"/>
<rect x="534" y="184" width="1" height="9" fill="#f58a3d"/>
<rect x="533" y="186" width="3" height="3" fill="#f58a3d"/>
<rect x="538" y="184" width="1" height="10" fill="#f58a3d"/>
<rect x="537" y="186" width="3" height="7" fill="#f58a3d"/>
<rect x="538" y="187" width="1" height="5" fill="#4a4640"/>
<rect x="542" y="187" width="1" height="10" fill="#f58a3d"/>
<rect x="541" y="189" width="3" height="7" fill="#f58a3d"/>
<rect x="542" y="190" width="1" height="5" fill="#4a4640"/>
<rect x="548" y="188" width="1" height="19" fill="#f58a3d"/>
<rect x="547" y="193" width="3" height="14" fill="#f58a3d"/>
<rect x="548" y="194" width="1" height="12" fill="#4a4640"/>
<rect x="551" y="198" width="1" height="9" fill="#f58a3d"/>
<rect x="550" y="204" width="3" height="3" fill="#f58a3d"/>
<rect x="556" y="198" width="1" height="8" fill="#f58a3d"/>
<rect x="555" y="199" width="3" height="6" fill="#f58a3d"/>
<rect x="561" y="198" width="1" height="4" fill="#f58a3d"/>
<rect x="560" y="198" width="3" height="4" fill="#f58a3d"/>
<rect x="561" y="199" width="1" height="2" fill="#4a4640"/>
<rect x="564" y="196" width="1" height="7" fill="#f58a3d"/>
<rect x="563" y="198" width="3" height="4" fill="#f58a3d"/>
<rect x="564" y="199" width="1" height="2" fill="#4a4640"/>
<rect x="569" y="192" width="1" height="12" fill="#f58a3d"/>
<rect x="568" y="193" width="3" height="10" fill="#f58a3d"/>
<rect x="569" y="194" width="1" height="8" fill="#4a4640"/>
<rect x="573" y="192" width="1" height="11" fill="#f58a3d"/>
<rect x="572" y="195" width="3" height="7" fill="#f58a3d"/>
<rect x="578" y="194" width="1" height="6" fill="#f58a3d"/>
<rect x="577" y="194" width="3" height="6" fill="#f58a3d"/>
<rect x="578" y="195" width="1" height="4" fill="#4a4640"/>
<rect x="582" y="194" width="1" height="9" fill="#f58a3d"/>
<rect x="581" y="195" width="3" height="7" fill="#f58a3d"/>
<rect x="582" y="196" width="1" height="5" fill="#4a4640"/>
<rect x="587" y="195" width="1" height="8" fill="#f58a3d"/>
<rect x="586" y="198" width="3" height="3" fill="#f58a3d"/>
<rect x="592" y="198" width="1" height="9" fill="#f58a3d"/>
<rect x="591" y="199" width="3" height="8" fill="#f58a3d"/>
<rect x="592" y="200" width="1" height="6" fill="#4a4640"/>
<rect x="596" y="196" width="1" height="10" fill="#f58a3d"/>
<rect x="595" y="198" width="3" height="6" fill="#f58a3d"/>
<rect x="601" y="195" width="1" height="12" fill="#f58a3d"/>
<rect x="600" y="197" width="3" height="7" fill="#f58a3d"/>
<rect x="601" y="198" width="1" height="5" fill="#4a4640"/>
<rect x="605" y="202" width="1" height="5" fill="#f58a3d"/>
<rect x="604" y="202" width="3" height="5" fill="#f58a3d"/>
<rect x="605" y="203" width="1" height="3" fill="#4a4640"/>
<rect x="609" y="201" width="1" height="6" fill="#f58a3d"/>
<rect x="608" y="202" width="3" height="4" fill="#f58a3d"/>
<rect x="609" y="203" width="1" height="2" fill="#4a4640"/>
<rect x="615" y="202" width="1" height="4" fill="#f58a3d"/>
<rect x="614" y="202" width="3" height="4" fill="#f58a3d"/>
<rect x="615" y="203" width="1" height="2" fill="#4a4640"/>
<rect x="618" y="203" width="1" height="13" fill="#f58a3d"/>
<rect x="617" y="204" width="3" height="9" fill="#f58a3d"/>
<rect x="618" y="205" width="1" height="7" fill="#4a4640"/>
<rect x="624" y="209" width="1" height="8" fill="#f58a3d"/>
<rect x="623" y="209" width="3" height="8" fill="#f58a3d"/>
<rect x="624" y="210" width="1" height="6" fill="#4a4640"/>
<rect x="628" y="212" width="1" height="11" fill="#f58a3d"/>
<rect x="627" y="215" width="3" height="6" fill="#f58a3d"/>
<rect x="628" y="216" width="1" height="4" fill="#4a4640"/>
<rect x="632" y="217" width="1" height="5" fill="#f58a3d"/>
<rect x="631" y="219" width="3" height="3" fill="#f58a3d"/>
<rect x="637" y="216" width="1" height="6" fill="#f58a3d"/>
<rect x="636" y="219" width="3" height="3" fill="#f58a3d"/>
<rect x="641" y="216" width="1" height="9" fill="#f58a3d"/>
<rect x="640" y="218" width="3" height="6" fill="#f58a3d"/>
<rect x="641" y="219" width="1" height="4" fill="#4a4640"/>
<rect x="646" y="209" width="1" height="15" fill="#f58a3d"/>
<rect x="645" y="212" width="3" height="11" fill="#f58a3d"/>
<rect x="650" y="211" width="1" height="8" fill="#f58a3d"/>
<rect x="649" y="211" width="3" height="8" fill="#f58a3d"/>
<rect x="650" y="212" width="1" height="6" fill="#4a4640"/>
<rect x="654" y="205" width="1" height="15" fill="#f58a3d"/>
<rect x="653" y="209" width="3" height="10" fill="#f58a3d"/>
<rect x="654" y="210" width="1" height="8" fill="#4a4640"/>
<rect x="659" y="207" width="1" height="13" fill="#f58a3d"/>
<rect x="658" y="209" width="3" height="10" fill="#f58a3d"/>
<rect x="659" y="210" width="1" height="8" fill="#4a4640"/>
<rect x="663" y="214" width="1" height="6" fill="#f58a3d"/>
<rect x="662" y="216" width="3" height="3" fill="#f58a3d"/>
<rect x="668" y="215" width="1" height="7" fill="#f58a3d"/>
<rect x="667" y="215" width="3" height="7" fill="#f58a3d"/>
<rect x="668" y="216" width="1" height="5" fill="#4a4640"/>
<rect x="672" y="210" width="1" height="13" fill="#f58a3d"/>
<rect x="671" y="216" width="3" height="5" fill="#f58a3d"/>
<rect x="672" y="217" width="1" height="3" fill="#4a4640"/>
<rect x="676" y="207" width="1" height="12" fill="#f58a3d"/>
<rect x="675" y="212" width="3" height="5" fill="#f58a3d"/>
<rect x="676" y="213" width="1" height="3" fill="#4a4640"/>
<rect x="682" y="199" width="1" height="14" fill="#f58a3d"/>
<rect x="681" y="202" width="3" height="8" fill="#f58a3d"/>
<rect x="682" y="203" width="1" height="6" fill="#4a4640"/>
<rect x="686" y="199" width="1" height="7" fill="#f58a3d"/>
<rect x="685" y="200" width="3" height="3" fill="#f58a3d"/>
<rect x="690" y="199" width="1" height="5" fill="#f58a3d"/>
<rect x="689" y="199" width="3" height="5" fill="#f58a3d"/>
<rect x="690" y="200" width="1" height="3" fill="#4a4640"/>
<rect x="694" y="198" width="1" height="7" fill="#f58a3d"/>
<rect x="693" y="200" width="3" height="3" fill="#f58a3d"/>
<rect x="699" y="197" width="1" height="8" fill="#f58a3d"/>
<rect x="698" y="199" width="3" height="4" fill="#f58a3d"/>
<rect x="699" y="200" width="1" height="2" fill="#4a4640"/>
<rect x="704" y="197" width="1" height="10" fill="#f58a3d"/>
<rect x="703" y="198" width="3" height="7" fill="#f58a3d"/>
<rect x="704" y="199" width="1" height="5" fill="#4a4640"/>
<rect x="708" y="202" width="1" height="9" fill="#f58a3d"/>
<rect x="707" y="202" width="3" height="6" fill="#f58a3d"/>
<rect x="708" y="203" width="1" height="4" fill="#4a4640"/>
<rect x="712" y="203" width="1" height="5" fill="#f58a3d"/>
<rect x="711" y="206" width="3" height="3" fill="#f58a3d"/>
<rect x="718" y="203" width="1" height="5" fill="#f58a3d"/>
<rect x="717" y="206" width="3" height="3" fill="#f58a3d"/>
<rect x="722" y="203" width="1" height="5" fill="#f58a3d"/>
<rect x="721" y="203" width="3" height="5" fill="#f58a3d"/>
<rect x="722" y="204" width="1" height="3" fill="#4a4640"/>
<rect x="726" y="206" width="1" height="7" fill="#f58a3d"/>
<rect x="725" y="206" width="3" height="7" fill="#f58a3d"/>
<rect x="726" y="207" width="1" height="5" fill="#4a4640"/>
<rect x="730" y="199" width="1" height="16" fill="#f58a3d"/>
<rect x="729" y="201" width="3" height="10" fill="#f58a3d"/>
<rect x="734" y="187" width="1" height="14" fill="#f58a3d"/>
<rect x="733" y="189" width="3" height="11" fill="#f58a3d"/>
<rect x="739" y="186" width="1" height="6" fill="#f58a3d"/>
<rect x="738" y="188" width="3" height="3" fill="#f58a3d"/>
<rect x="743" y="186" width="1" height="6" fill="#f58a3d"/>
<rect x="742" y="188" width="3" height="3" fill="#f58a3d"/>
<rect x="748" y="189" width="1" height="5" fill="#f58a3d"/>
<rect x="747" y="189" width="3" height="5" fill="#f58a3d"/>
<rect x="748" y="190" width="1" height="3" fill="#4a4640"/>
<rect x="752" y="186" width="1" height="11" fill="#f58a3d"/>
<rect x="751" y="189" width="3" height="6" fill="#f58a3d"/>
<rect x="752" y="190" width="1" height="4" fill="#4a4640"/>
<rect x="758" y="182" width="1" height="12" fill="#f58a3d"/>
<rect x="757" y="185" width="3" height="5" fill="#f58a3d"/>
<rect x="761" y="175" width="1" height="12" fill="#f58a3d"/>
<rect x="760" y="176" width="3" height="10" fill="#f58a3d"/>
<rect x="766" y="169" width="1" height="8" fill="#f58a3d"/>
<rect x="765" y="171" width="3" height="5" fill="#f58a3d"/>
<rect x="766" y="172" width="1" height="3" fill="#4a4640"/>
<rect x="771" y="169" width="1" height="4" fill="#f58a3d"/>
<rect x="770" y="169" width="3" height="4" fill="#f58a3d"/>
<rect x="771" y="170" width="1" height="2" fill="#4a4640"/>
<rect x="775" y="169" width="1" height="4" fill="#f58a3d"/>
<rect x="774" y="170" width="3" height="3" fill="#f58a3d"/>
<rect x="780" y="166" width="1" height="7" fill="#f58a3d"/>
<rect x="779" y="166" width="3" height="7" fill="#f58a3d"/>
<rect x="780" y="167" width="1" height="5" fill="#4a4640"/>
<rect x="784" y="162" width="1" height="8" fill="#f58a3d"/>
<rect x="783" y="165" width="3" height="3" fill="#f58a3d"/>
<rect x="788" y="156" width="1" height="13" fill="#f58a3d"/>
<rect x="787" y="166" width="3" height="3" fill="#f58a3d"/>
<rect x="794" y="165" width="1" height="11" fill="#f58a3d"/>
<rect x="793" y="166" width="3" height="7" fill="#f58a3d"/>
<rect x="794" y="167" width="1" height="5" fill="#4a4640"/>
<rect x="798" y="170" width="1" height="3" fill="#f58a3d"/>
<rect x="797" y="170" width="3" height="3" fill="#f58a3d"/>
<rect x="802" y="169" width="1" height="7" fill="#f58a3d"/>
<rect x="801" y="171" width="3" height="3" fill="#f58a3d"/>
<rect x="806" y="163" width="1" height="10" fill="#f58a3d"/>
<rect x="805" y="167" width="3" height="3" fill="#f58a3d"/>
<rect x="810" y="162" width="1" height="11" fill="#f58a3d"/>
<rect x="809" y="165" width="3" height="3" fill="#f58a3d"/>
<rect x="816" y="152" width="1" height="14" fill="#f58a3d"/>
<rect x="815" y="156" width="3" height="9" fill="#f58a3d"/>
<rect x="819" y="154" width="1" height="5" fill="#f58a3d"/>
<rect x="818" y="154" width="3" height="5" fill="#f58a3d"/>
<rect x="819" y="155" width="1" height="3" fill="#4a4640"/>
<rect x="824" y="155" width="1" height="4" fill="#f58a3d"/>
<rect x="823" y="156" width="3" height="3" fill="#f58a3d"/>
<rect x="828" y="155" width="1" height="7" fill="#f58a3d"/>
<rect x="827" y="155" width="3" height="7" fill="#f58a3d"/>
<rect x="828" y="156" width="1" height="5" fill="#4a4640"/>
<rect x="833" y="159" width="1" height="8" fill="#f58a3d"/>
<rect x="832" y="159" width="3" height="8" fill="#f58a3d"/>
<rect x="833" y="160" width="1" height="6" fill="#4a4640"/>
<rect x="837" y="162" width="1" height="10" fill="#f58a3d"/>
<rect x="836" y="162" width="3" height="8" fill="#f58a3d"/>
<rect x="837" y="163" width="1" height="6" fill="#4a4640"/>
<rect x="842" y="160" width="1" height="10" fill="#f58a3d"/>
<rect x="841" y="162" width="3" height="8" fill="#f58a3d"/>
<rect x="846" y="158" width="1" height="7" fill="#f58a3d"/>
<rect x="845" y="162" width="3" height="3" fill="#f58a3d"/>
<rect x="851" y="161" width="1" height="4" fill="#f58a3d"/>
<rect x="850" y="162" width="3" height="3" fill="#f58a3d"/>
<rect x="856" y="162" width="1" height="6" fill="#f58a3d"/>
<rect x="855" y="162" width="3" height="5" fill="#f58a3d"/>
<rect x="856" y="163" width="1" height="3" fill="#4a4640"/>
<rect x="10" y="279" width="1" height="2" fill="#d02020"/>
<rect x="15" y="279" width="1" height="2" fill="#d02020"/>
<rect x="19" y="279" width="1" height="2" fill="#d02020"/>
<rect x="24" y="279.5" width="1.6" height="1.7" fill="#d02020"/>
<rect x="28" y="279.5" width="1.6" height="3.7" fill="#d02020"/>
<rect x="33" y="279.5" width="1.6" height="6.3" fill="#d02020"/>
<rect x="37" y="279.5" width="1.6" height="9.1" fill="#d02020"/>
<rect x="42" y="279.5" width="1.6" height="10.9" fill="#d02020"/>
<rect x="46" y="279.5" width="1.6" height="12.4" fill="#d02020"/>
<rect x="51" y="279.5" width="1.6" height="12.0" fill="#d02020"/>
<rect x="55" y="279.5" width="1.6" height="11.6" fill="#d02020"/>
<rect x="60" y="279.5" width="1.6" height="11.3" fill="#d02020"/>
<rect x="64" y="279.5" width="1.6" height="11.2" fill="#d02020"/>
<rect x="69" y="279.5" width="1.6" height="10.1" fill="#d02020"/>
<rect x="73" y="279.5" width="1.6" height="8.7" fill="#d02020"/>
<rect x="77" y="279.5" width="1.6" height="8.2" fill="#d02020"/>
<rect x="82" y="279.5" width="1.6" height="8.2" fill="#d02020"/>
<rect x="86" y="279.5" width="1.6" height="6.0" fill="#d02020"/>
<rect x="91" y="279.5" width="1.6" height="2.6" fill="#d02020"/>
<rect x="95" y="279" width="1" height="2" fill="#d02020"/>
<rect x="100" y="277.6" width="1.6" height="1.9" fill="#d02020"/>
<rect x="104" y="276.6" width="1.6" height="2.9" fill="#d02020"/>
<rect x="109" y="276.2" width="1.6" height="3.3" fill="#d02020"/>
<rect x="113" y="276.5" width="1.6" height="3.0" fill="#d02020"/>
<rect x="118" y="276.7" width="1.6" height="2.8" fill="#d02020"/>
<rect x="122" y="276.9" width="1.6" height="2.6" fill="#d02020"/>
<rect x="127" y="277.5" width="1.6" height="2.0" fill="#d02020"/>
<rect x="131" y="279" width="1" height="2" fill="#d02020"/>
<rect x="136" y="279" width="1" height="2" fill="#d02020"/>
<rect x="140" y="279" width="1" height="2" fill="#d02020"/>
<rect x="144" y="279.5" width="1.6" height="1.8" fill="#d02020"/>
<rect x="149" y="279.5" width="1.6" height="3.9" fill="#d02020"/>
<rect x="153" y="279.5" width="1.6" height="6.1" fill="#d02020"/>
<rect x="158" y="279.5" width="1.6" height="8.4" fill="#d02020"/>
<rect x="162" y="279.5" width="1.6" height="9.8" fill="#d02020"/>
<rect x="167" y="279.5" width="1.6" height="9.2" fill="#d02020"/>
<rect x="171" y="279.5" width="1.6" height="8.7" fill="#d02020"/>
<rect x="176" y="279.5" width="1.6" height="8.1" fill="#d02020"/>
<rect x="180" y="279.5" width="1.6" height="7.6" fill="#d02020"/>
<rect x="185" y="279.5" width="1.6" height="7.0" fill="#d02020"/>
<rect x="189" y="279.5" width="1.6" height="6.7" fill="#d02020"/>
<rect x="194" y="279.5" width="1.6" height="6.6" fill="#d02020"/>
<rect x="198" y="279.5" width="1.6" height="6.7" fill="#d02020"/>
<rect x="203" y="279.5" width="1.6" height="7.0" fill="#d02020"/>
<rect x="207" y="279.5" width="1.6" height="6.9" fill="#d02020"/>
<rect x="212" y="279.5" width="1.6" height="4.4" fill="#d02020"/>
<rect x="216" y="279.5" width="1.6" height="2.0" fill="#d02020"/>
<rect x="220" y="279" width="1" height="2" fill="#d02020"/>
<rect x="225" y="277.6" width="1.6" height="1.9" fill="#d02020"/>
<rect x="229" y="276.3" width="1.6" height="3.2" fill="#d02020"/>
<rect x="234" y="275.0" width="1.6" height="4.5" fill="#d02020"/>
<rect x="238" y="274.5" width="1.6" height="5.0" fill="#d02020"/>
<rect x="243" y="274.2" width="1.6" height="5.3" fill="#d02020"/>
<rect x="247" y="273.9" width="1.6" height="5.6" fill="#d02020"/>
<rect x="252" y="273.5" width="1.6" height="6.0" fill="#d02020"/>
<rect x="256" y="273.1" width="1.6" height="6.4" fill="#d02020"/>
<rect x="261" y="272.7" width="1.6" height="6.8" fill="#d02020"/>
<rect x="265" y="272.4" width="1.6" height="7.1" fill="#d02020"/>
<rect x="270" y="271.2" width="1.6" height="8.3" fill="#d02020"/>
<rect x="274" y="269.9" width="1.6" height="9.6" fill="#d02020"/>
<rect x="279" y="269.1" width="1.6" height="10.4" fill="#d02020"/>
<rect x="283" y="269.0" width="1.6" height="10.5" fill="#d02020"/>
<rect x="288" y="269.5" width="1.6" height="10.0" fill="#d02020"/>
<rect x="292" y="270.8" width="1.6" height="8.7" fill="#d02020"/>
<rect x="296" y="273.0" width="1.6" height="6.5" fill="#d02020"/>
<rect x="301" y="275.5" width="1.6" height="4.0" fill="#d02020"/>
<rect x="305" y="276.4" width="1.6" height="3.1" fill="#d02020"/>
<rect x="310" y="277.4" width="1.6" height="2.1" fill="#d02020"/>
<rect x="314" y="279" width="1" height="2" fill="#d02020"/>
<rect x="319" y="279" width="1" height="2" fill="#d02020"/>
<rect x="323" y="279" width="1" height="2" fill="#d02020"/>
<rect x="328" y="279" width="1" height="2" fill="#d02020"/>
<rect x="332" y="279" width="1" height="2" fill="#d02020"/>
<rect x="337" y="279" width="1" height="2" fill="#d02020"/>
<rect x="341" y="279" width="1" height="2" fill="#d02020"/>
<rect x="346" y="279" width="1" height="2" fill="#d02020"/>
<rect x="350" y="279" width="1" height="2" fill="#d02020"/>
<rect x="355" y="279.5" width="1.6" height="1.7" fill="#d02020"/>
<rect x="359" y="279.5" width="1.6" height="3.2" fill="#d02020"/>
<rect x="364" y="279.5" width="1.6" height="3.9" fill="#d02020"/>
<rect x="368" y="279.5" width="1.6" height="3.8" fill="#d02020"/>
<rect x="372" y="279.5" width="1.6" height="3.8" fill="#d02020"/>
<rect x="377" y="279.5" width="1.6" height="3.1" fill="#d02020"/>
<rect x="381" y="279.5" width="1.6" height="2.5" fill="#d02020"/>
<rect x="386" y="279.5" width="1.6" height="1.8" fill="#d02020"/>
<rect x="390" y="279" width="1" height="2" fill="#d02020"/>
<rect x="395" y="277.3" width="1.6" height="2.2" fill="#d02020"/>
<rect x="399" y="275.9" width="1.6" height="3.6" fill="#d02020"/>
<rect x="404" y="276.2" width="1.6" height="3.3" fill="#d02020"/>
<rect x="408" y="277.5" width="1.6" height="2.0" fill="#d02020"/>
<rect x="413" y="279" width="1" height="2" fill="#d02020"/>
<rect x="417" y="279" width="1" height="2" fill="#d02020"/>
<rect x="422" y="279" width="1" height="2" fill="#d02020"/>
<rect x="426" y="279.5" width="1.6" height="1.7" fill="#d02020"/>
<rect x="431" y="279.5" width="1.6" height="2.1" fill="#d02020"/>
<rect x="435" y="279.5" width="1.6" height="2.5" fill="#d02020"/>
<rect x="440" y="279.5" width="1.6" height="2.9" fill="#d02020"/>
<rect x="444" y="279.5" width="1.6" height="3.7" fill="#d02020"/>
<rect x="448" y="279.5" width="1.6" height="4.6" fill="#d02020"/>
<rect x="453" y="279.5" width="1.6" height="4.1" fill="#d02020"/>
<rect x="457" y="279.5" width="1.6" height="3.6" fill="#d02020"/>
<rect x="462" y="279.5" width="1.6" height="2.5" fill="#d02020"/>
<rect x="466" y="279" width="1" height="2" fill="#d02020"/>
<rect x="471" y="279" width="1" height="2" fill="#d02020"/>
<rect x="475" y="279" width="1" height="2" fill="#d02020"/>
<rect x="480" y="279" width="1" height="2" fill="#d02020"/>
<rect x="484" y="279" width="1" height="2" fill="#d02020"/>
<rect x="489" y="279" width="1" height="2" fill="#d02020"/>
<rect x="493" y="279.5" width="1.6" height="2.7" fill="#d02020"/>
<rect x="498" y="279.5" width="1.6" height="4.4" fill="#d02020"/>
<rect x="502" y="279.5" width="1.6" height="5.8" fill="#d02020"/>
<rect x="507" y="279.5" width="1.6" height="6.2" fill="#d02020"/>
<rect x="511" y="279.5" width="1.6" height="6.2" fill="#d02020"/>
<rect x="516" y="279.5" width="1.6" height="6.2" fill="#d02020"/>
<rect x="520" y="279.5" width="1.6" height="6.1" fill="#d02020"/>
<rect x="524" y="279.5" width="1.6" height="6.3" fill="#d02020"/>
<rect x="529" y="279.5" width="1.6" height="6.6" fill="#d02020"/>
<rect x="533" y="279.5" width="1.6" height="5.3" fill="#d02020"/>
<rect x="538" y="279.5" width="1.6" height="4.3" fill="#d02020"/>
<rect x="542" y="279.5" width="1.6" height="4.2" fill="#d02020"/>
<rect x="547" y="279.5" width="1.6" height="5.2" fill="#d02020"/>
<rect x="551" y="279.5" width="1.6" height="6.2" fill="#d02020"/>
<rect x="556" y="279.5" width="1.6" height="5.4" fill="#d02020"/>
<rect x="560" y="279.5" width="1.6" height="4.5" fill="#d02020"/>
<rect x="565" y="279.5" width="1.6" height="3.0" fill="#d02020"/>
<rect x="569" y="279.5" width="1.6" height="1.9" fill="#d02020"/>
<rect x="574" y="279" width="1" height="2" fill="#d02020"/>
<rect x="578" y="279" width="1" height="2" fill="#d02020"/>
<rect x="583" y="279" width="1" height="2" fill="#d02020"/>
<rect x="587" y="279" width="1" height="2" fill="#d02020"/>
<rect x="592" y="279" width="1" height="2" fill="#d02020"/>
<rect x="596" y="279" width="1" height="2" fill="#d02020"/>
<rect x="600" y="279" width="1" height="2" fill="#d02020"/>
<rect x="605" y="279" width="1" height="2" fill="#d02020"/>
<rect x="609" y="279" width="1" height="2" fill="#d02020"/>
<rect x="614" y="279" width="1" height="2" fill="#d02020"/>
<rect x="618" y="279" width="1" height="2" fill="#d02020"/>
<rect x="623" y="279" width="1" height="2" fill="#d02020"/>
<rect x="627" y="279" width="1" height="2" fill="#d02020"/>
<rect x="632" y="279.5" width="1.6" height="1.6" fill="#d02020"/>
<rect x="636" y="279.5" width="1.6" height="2.5" fill="#d02020"/>
<rect x="641" y="279.5" width="1.6" height="2.0" fill="#d02020"/>
<rect x="645" y="279" width="1" height="2" fill="#d02020"/>
<rect x="650" y="279" width="1" height="2" fill="#d02020"/>
<rect x="654" y="279" width="1" height="2" fill="#d02020"/>
<rect x="659" y="279" width="1" height="2" fill="#d02020"/>
<rect x="663" y="279" width="1" height="2" fill="#d02020"/>
<rect x="667" y="279" width="1" height="2" fill="#d02020"/>
<rect x="672" y="277.9" width="1.6" height="1.6" fill="#d02020"/>
<rect x="676" y="277.0" width="1.6" height="2.5" fill="#d02020"/>
<rect x="681" y="275.8" width="1.6" height="3.7" fill="#d02020"/>
<rect x="685" y="274.8" width="1.6" height="4.7" fill="#d02020"/>
<rect x="690" y="274.1" width="1.6" height="5.4" fill="#d02020"/>
<rect x="694" y="273.2" width="1.6" height="6.3" fill="#d02020"/>
<rect x="699" y="272.2" width="1.6" height="7.3" fill="#d02020"/>
<rect x="703" y="273.2" width="1.6" height="6.3" fill="#d02020"/>
<rect x="708" y="274.2" width="1.6" height="5.3" fill="#d02020"/>
<rect x="712" y="275.2" width="1.6" height="4.3" fill="#d02020"/>
<rect x="717" y="276.3" width="1.6" height="3.2" fill="#d02020"/>
<rect x="721" y="279" width="1" height="2" fill="#d02020"/>
<rect x="726" y="279" width="1" height="2" fill="#d02020"/>
<rect x="730" y="279" width="1" height="2" fill="#d02020"/>
<rect x="735" y="277.3" width="1.6" height="2.2" fill="#d02020"/>
<rect x="739" y="276.2" width="1.6" height="3.3" fill="#d02020"/>
<rect x="743" y="275.4" width="1.6" height="4.1" fill="#d02020"/>
<rect x="748" y="275.9" width="1.6" height="3.6" fill="#d02020"/>
<rect x="752" y="276.9" width="1.6" height="2.6" fill="#d02020"/>
<rect x="757" y="276.6" width="1.6" height="2.9" fill="#d02020"/>
<rect x="761" y="275.5" width="1.6" height="4.0" fill="#d02020"/>
<rect x="766" y="274.3" width="1.6" height="5.2" fill="#d02020"/>
<rect x="770" y="273.2" width="1.6" height="6.3" fill="#d02020"/>
<rect x="775" y="273.1" width="1.6" height="6.4" fill="#d02020"/>
<rect x="779" y="273.2" width="1.6" height="6.3" fill="#d02020"/>
<rect x="784" y="273.3" width="1.6" height="6.2" fill="#d02020"/>
<rect x="788" y="273.9" width="1.6" height="5.6" fill="#d02020"/>
<rect x="793" y="275.8" width="1.6" height="3.7" fill="#d02020"/>
<rect x="797" y="277.5" width="1.6" height="2.0" fill="#d02020"/>
<rect x="802" y="278.0" width="1.6" height="1.5" fill="#d02020"/>
<rect x="806" y="279" width="1" height="2" fill="#d02020"/>
<rect x="811" y="279" width="1" height="2" fill="#d02020"/>
<rect x="815" y="279" width="1" height="2" fill="#d02020"/>
<rect x="819" y="279" width="1" height="2" fill="#d02020"/>
<rect x="824" y="279" width="1" height="2" fill="#d02020"/>
<rect x="828" y="279" width="1" height="2" fill="#d02020"/>
<rect x="833" y="279.5" width="1.6" height="2.4" fill="#d02020"/>
<rect x="837" y="279.5" width="1.6" height="3.7" fill="#d02020"/>
<rect x="842" y="279.5" width="1.6" height="4.1" fill="#d02020"/>
<rect x="846" y="279.5" width="1.6" height="3.9" fill="#d02020"/>
<rect x="851" y="279.5" width="1.6" height="3.8" fill="#d02020"/>
<rect x="855" y="279.5" width="1.6" height="4.0" fill="#d02020"/>
<polyline points="21.0,269.1 28.6,272.9 38.2,282.5 45.8,288.2 57.3,293.9 64.9,297.4 74.5,299.3 82.1,303.1 87.9,301.6 95.5,295.8 107.0,291.1 122.2,289.2 129.9,289.2 145.1,292.0 162.3,304.4 181.4,310.2 191.0,313.0 206.3,318.8 210.0,317.8 221.5,312.1 234.8,305.4 248.2,300.6 259.7,293.9 267.3,290.1 280.7,278.6 290.2,273.9 294.0,273.9 299.8,276.7 313.1,276.7 328.4,277.7 339.9,280.6 353.2,281.5 362.8,285.3 372.3,287.2 385.7,286.3 395.3,279.6 401.0,276.7 408.6,277.7 420.1,280.5 439.1,283.4 448.6,286.3 458.2,286.3 469.7,282.8 481.1,280.6 488.8,282.5 502.1,290.1 515.5,294.9 528.9,299.3 540.3,299.3 551.8,304.4 561.3,304.4 572.8,301.6 588.1,299.3 603.3,297.4 614.8,295.5 626.3,296.8 637.7,300.6 649.1,298.7 664.4,295.8 675.8,293.0 683.5,288.2 698.8,280.9 715.9,280.6 725.5,282.5 733.1,278.6 744.6,272.9 754.1,272.0 771.3,262.4 786.6,258.0 798.1,259.9 813.3,259.5 824.8,258.6 836.3,263.0 850.0,265.3 855.0,266.2" fill="none" stroke="#101a78" stroke-width="1.3" stroke-linejoin="round" />
<circle cx="28.3" cy="269.1" r="1.35" fill="#d82a30"/>
<circle cx="32.8" cy="270.7" r="1.35" fill="#d82a30"/>
<circle cx="37.2" cy="272.5" r="1.35" fill="#d82a30"/>
<circle cx="41.7" cy="274.2" r="1.35" fill="#d82a30"/>
<circle cx="46.2" cy="276.0" r="1.35" fill="#d82a30"/>
<circle cx="50.6" cy="278.6" r="1.35" fill="#d82a30"/>
<circle cx="55.1" cy="281.2" r="1.35" fill="#d82a30"/>
<circle cx="59.6" cy="283.6" r="1.35" fill="#d82a30"/>
<circle cx="64.0" cy="285.8" r="1.35" fill="#d82a30"/>
<circle cx="68.5" cy="288.1" r="1.35" fill="#d82a30"/>
<circle cx="73.0" cy="290.3" r="1.35" fill="#d82a30"/>
<circle cx="77.5" cy="292.6" r="1.35" fill="#d82a30"/>
<circle cx="81.9" cy="294.8" r="1.35" fill="#d82a30"/>
<circle cx="86.4" cy="296.0" r="1.35" fill="#d82a30"/>
<circle cx="90.9" cy="296.7" r="1.35" fill="#d82a30"/>
<circle cx="95.3" cy="296.3" r="1.35" fill="#d82a30"/>
<circle cx="99.8" cy="295.9" r="1.35" fill="#d82a30"/>
<circle cx="104.3" cy="295.2" r="1.35" fill="#d82a30"/>
<circle cx="108.7" cy="294.2" r="1.35" fill="#d82a30"/>
<circle cx="113.2" cy="293.3" r="1.35" fill="#d82a30"/>
<circle cx="117.7" cy="292.5" r="1.35" fill="#d82a30"/>
<circle cx="122.2" cy="291.9" r="1.35" fill="#d82a30"/>
<circle cx="126.6" cy="291.2" r="1.35" fill="#d82a30"/>
<circle cx="131.1" cy="290.5" r="1.35" fill="#d82a30"/>
<circle cx="135.6" cy="290.1" r="1.35" fill="#d82a30"/>
<circle cx="140.0" cy="290.1" r="1.35" fill="#d82a30"/>
<circle cx="144.5" cy="290.1" r="1.35" fill="#d82a30"/>
<circle cx="149.0" cy="290.9" r="1.35" fill="#d82a30"/>
<circle cx="153.4" cy="291.9" r="1.35" fill="#d82a30"/>
<circle cx="157.9" cy="292.9" r="1.35" fill="#d82a30"/>
<circle cx="162.4" cy="294.7" r="1.35" fill="#d82a30"/>
<circle cx="166.8" cy="296.6" r="1.35" fill="#d82a30"/>
<circle cx="171.3" cy="298.5" r="1.35" fill="#d82a30"/>
<circle cx="175.8" cy="300.4" r="1.35" fill="#d82a30"/>
<circle cx="180.3" cy="302.3" r="1.35" fill="#d82a30"/>
<circle cx="184.7" cy="304.2" r="1.35" fill="#d82a30"/>
<circle cx="189.2" cy="305.8" r="1.35" fill="#d82a30"/>
<circle cx="193.7" cy="307.4" r="1.35" fill="#d82a30"/>
<circle cx="198.1" cy="309.0" r="1.35" fill="#d82a30"/>
<circle cx="202.6" cy="310.4" r="1.35" fill="#d82a30"/>
<circle cx="207.1" cy="311.7" r="1.35" fill="#d82a30"/>
<circle cx="211.5" cy="312.7" r="1.35" fill="#d82a30"/>
<circle cx="216.0" cy="312.8" r="1.35" fill="#d82a30"/>
<circle cx="220.5" cy="313.0" r="1.35" fill="#d82a30"/>
<circle cx="225.0" cy="312.3" r="1.35" fill="#d82a30"/>
<circle cx="229.4" cy="311.3" r="1.35" fill="#d82a30"/>
<circle cx="233.9" cy="310.4" r="1.35" fill="#d82a30"/>
<circle cx="238.4" cy="309.2" r="1.35" fill="#d82a30"/>
<circle cx="242.8" cy="307.9" r="1.35" fill="#d82a30"/>
<circle cx="247.3" cy="306.6" r="1.35" fill="#d82a30"/>
<circle cx="251.8" cy="304.5" r="1.35" fill="#d82a30"/>
<circle cx="256.2" cy="302.3" r="1.35" fill="#d82a30"/>
<circle cx="260.7" cy="300.2" r="1.35" fill="#d82a30"/>
<circle cx="265.2" cy="298.3" r="1.35" fill="#d82a30"/>
<circle cx="269.7" cy="296.4" r="1.35" fill="#d82a30"/>
<circle cx="274.1" cy="293.8" r="1.35" fill="#d82a30"/>
<circle cx="278.6" cy="290.8" r="1.35" fill="#d82a30"/>
<circle cx="283.1" cy="287.9" r="1.35" fill="#d82a30"/>
<circle cx="287.5" cy="285.2" r="1.35" fill="#d82a30"/>
<circle cx="292.0" cy="282.6" r="1.35" fill="#d82a30"/>
<circle cx="296.5" cy="281.6" r="1.35" fill="#d82a30"/>
<circle cx="300.9" cy="280.7" r="1.35" fill="#d82a30"/>
<circle cx="305.4" cy="279.8" r="1.35" fill="#d82a30"/>
<circle cx="309.9" cy="278.8" r="1.35" fill="#d82a30"/>
<circle cx="314.4" cy="277.8" r="1.35" fill="#d82a30"/>
<circle cx="318.8" cy="277.9" r="1.35" fill="#d82a30"/>
<circle cx="323.3" cy="278.1" r="1.35" fill="#d82a30"/>
<circle cx="327.8" cy="278.3" r="1.35" fill="#d82a30"/>
<circle cx="332.2" cy="278.6" r="1.35" fill="#d82a30"/>
<circle cx="336.7" cy="279.0" r="1.35" fill="#d82a30"/>
<circle cx="341.2" cy="279.4" r="1.35" fill="#d82a30"/>
<circle cx="345.6" cy="279.7" r="1.35" fill="#d82a30"/>
<circle cx="350.1" cy="280.0" r="1.35" fill="#d82a30"/>
<circle cx="354.6" cy="280.3" r="1.35" fill="#d82a30"/>
<circle cx="359.1" cy="280.6" r="1.35" fill="#d82a30"/>
<circle cx="363.5" cy="281.6" r="1.35" fill="#d82a30"/>
<circle cx="368.0" cy="282.5" r="1.35" fill="#d82a30"/>
<circle cx="372.5" cy="283.4" r="1.35" fill="#d82a30"/>
<circle cx="376.9" cy="283.7" r="1.35" fill="#d82a30"/>
<circle cx="381.4" cy="284.1" r="1.35" fill="#d82a30"/>
<circle cx="385.9" cy="284.4" r="1.35" fill="#d82a30"/>
<circle cx="390.3" cy="283.2" r="1.35" fill="#d82a30"/>
<circle cx="394.8" cy="282.1" r="1.35" fill="#d82a30"/>
<circle cx="399.3" cy="281.2" r="1.35" fill="#d82a30"/>
<circle cx="403.8" cy="280.4" r="1.35" fill="#d82a30"/>
<circle cx="408.2" cy="279.7" r="1.35" fill="#d82a30"/>
<circle cx="412.7" cy="279.5" r="1.35" fill="#d82a30"/>
<circle cx="417.2" cy="279.4" r="1.35" fill="#d82a30"/>
<circle cx="421.6" cy="279.4" r="1.35" fill="#d82a30"/>
<circle cx="426.1" cy="279.7" r="1.35" fill="#d82a30"/>
<circle cx="430.6" cy="280.0" r="1.35" fill="#d82a30"/>
<circle cx="435.0" cy="280.3" r="1.35" fill="#d82a30"/>
<circle cx="439.5" cy="280.6" r="1.35" fill="#d82a30"/>
<circle cx="444.0" cy="281.2" r="1.35" fill="#d82a30"/>
<circle cx="448.5" cy="281.7" r="1.35" fill="#d82a30"/>
<circle cx="452.9" cy="282.2" r="1.35" fill="#d82a30"/>
<circle cx="457.4" cy="282.7" r="1.35" fill="#d82a30"/>
<circle cx="461.9" cy="282.7" r="1.35" fill="#d82a30"/>
<circle cx="466.3" cy="282.6" r="1.35" fill="#d82a30"/>
<circle cx="470.8" cy="282.3" r="1.35" fill="#d82a30"/>
<circle cx="475.3" cy="281.6" r="1.35" fill="#d82a30"/>
<circle cx="479.7" cy="280.8" r="1.35" fill="#d82a30"/>
<circle cx="484.2" cy="281.0" r="1.35" fill="#d82a30"/>
<circle cx="488.7" cy="281.7" r="1.35" fill="#d82a30"/>
<circle cx="493.2" cy="282.3" r="1.35" fill="#d82a30"/>
<circle cx="497.6" cy="283.1" r="1.35" fill="#d82a30"/>
<circle cx="502.1" cy="284.3" r="1.35" fill="#d82a30"/>
<circle cx="506.6" cy="285.5" r="1.35" fill="#d82a30"/>
<circle cx="511.0" cy="287.1" r="1.35" fill="#d82a30"/>
<circle cx="515.5" cy="288.7" r="1.35" fill="#d82a30"/>
<circle cx="520.0" cy="290.3" r="1.35" fill="#d82a30"/>
<circle cx="524.4" cy="291.5" r="1.35" fill="#d82a30"/>
<circle cx="528.9" cy="292.7" r="1.35" fill="#d82a30"/>
<circle cx="533.4" cy="294.0" r="1.35" fill="#d82a30"/>
<circle cx="537.9" cy="295.0" r="1.35" fill="#d82a30"/>
<circle cx="542.3" cy="296.0" r="1.35" fill="#d82a30"/>
<circle cx="546.8" cy="297.0" r="1.35" fill="#d82a30"/>
<circle cx="551.3" cy="298.0" r="1.35" fill="#d82a30"/>
<circle cx="555.7" cy="299.0" r="1.35" fill="#d82a30"/>
<circle cx="560.2" cy="299.9" r="1.35" fill="#d82a30"/>
<circle cx="564.7" cy="300.6" r="1.35" fill="#d82a30"/>
<circle cx="569.1" cy="300.6" r="1.35" fill="#d82a30"/>
<circle cx="573.6" cy="300.6" r="1.35" fill="#d82a30"/>
<circle cx="578.1" cy="300.4" r="1.35" fill="#d82a30"/>
<circle cx="582.6" cy="299.9" r="1.35" fill="#d82a30"/>
<circle cx="587.0" cy="299.3" r="1.35" fill="#d82a30"/>
<circle cx="591.5" cy="298.7" r="1.35" fill="#d82a30"/>
<circle cx="596.0" cy="298.3" r="1.35" fill="#d82a30"/>
<circle cx="600.4" cy="297.9" r="1.35" fill="#d82a30"/>
<circle cx="604.9" cy="297.4" r="1.35" fill="#d82a30"/>
<circle cx="609.4" cy="297.0" r="1.35" fill="#d82a30"/>
<circle cx="613.8" cy="296.8" r="1.35" fill="#d82a30"/>
<circle cx="618.3" cy="296.8" r="1.35" fill="#d82a30"/>
<circle cx="622.8" cy="296.8" r="1.35" fill="#d82a30"/>
<circle cx="627.3" cy="296.8" r="1.35" fill="#d82a30"/>
<circle cx="631.7" cy="297.0" r="1.35" fill="#d82a30"/>
<circle cx="636.2" cy="297.6" r="1.35" fill="#d82a30"/>
<circle cx="640.7" cy="298.1" r="1.35" fill="#d82a30"/>
<circle cx="645.1" cy="298.7" r="1.35" fill="#d82a30"/>
<circle cx="649.6" cy="298.1" r="1.35" fill="#d82a30"/>
<circle cx="654.1" cy="297.4" r="1.35" fill="#d82a30"/>
<circle cx="658.5" cy="296.7" r="1.35" fill="#d82a30"/>
<circle cx="663.0" cy="296.2" r="1.35" fill="#d82a30"/>
<circle cx="667.5" cy="295.9" r="1.35" fill="#d82a30"/>
<circle cx="672.0" cy="295.6" r="1.35" fill="#d82a30"/>
<circle cx="676.4" cy="295.1" r="1.35" fill="#d82a30"/>
<circle cx="680.9" cy="293.6" r="1.35" fill="#d82a30"/>
<circle cx="685.4" cy="292.0" r="1.35" fill="#d82a30"/>
<circle cx="689.8" cy="290.5" r="1.35" fill="#d82a30"/>
<circle cx="694.3" cy="289.3" r="1.35" fill="#d82a30"/>
<circle cx="698.8" cy="288.2" r="1.35" fill="#d82a30"/>
<circle cx="703.2" cy="287.1" r="1.35" fill="#d82a30"/>
<circle cx="707.7" cy="286.0" r="1.35" fill="#d82a30"/>
<circle cx="712.2" cy="285.0" r="1.35" fill="#d82a30"/>
<circle cx="716.7" cy="284.0" r="1.35" fill="#d82a30"/>
<circle cx="721.1" cy="282.9" r="1.35" fill="#d82a30"/>
<circle cx="725.6" cy="282.0" r="1.35" fill="#d82a30"/>
<circle cx="730.1" cy="281.0" r="1.35" fill="#d82a30"/>
<circle cx="734.5" cy="280.1" r="1.35" fill="#d82a30"/>
<circle cx="739.0" cy="279.0" r="1.35" fill="#d82a30"/>
<circle cx="743.5" cy="277.6" r="1.35" fill="#d82a30"/>
<circle cx="747.9" cy="276.1" r="1.35" fill="#d82a30"/>
<circle cx="752.4" cy="274.7" r="1.35" fill="#d82a30"/>
<circle cx="756.9" cy="273.4" r="1.35" fill="#d82a30"/>
<circle cx="761.4" cy="272.0" r="1.35" fill="#d82a30"/>
<circle cx="765.8" cy="270.6" r="1.35" fill="#d82a30"/>
<circle cx="770.3" cy="269.2" r="1.35" fill="#d82a30"/>
<circle cx="774.8" cy="267.8" r="1.35" fill="#d82a30"/>
<circle cx="779.2" cy="266.4" r="1.35" fill="#d82a30"/>
<circle cx="783.7" cy="265.1" r="1.35" fill="#d82a30"/>
<circle cx="788.2" cy="263.9" r="1.35" fill="#d82a30"/>
<circle cx="792.6" cy="262.7" r="1.35" fill="#d82a30"/>
<circle cx="797.1" cy="261.7" r="1.35" fill="#d82a30"/>
<circle cx="801.6" cy="261.3" r="1.35" fill="#d82a30"/>
<circle cx="806.1" cy="261.0" r="1.35" fill="#d82a30"/>
<circle cx="810.5" cy="260.6" r="1.35" fill="#d82a30"/>
<circle cx="815.0" cy="260.2" r="1.35" fill="#d82a30"/>
<circle cx="819.5" cy="259.8" r="1.35" fill="#d82a30"/>
<circle cx="823.9" cy="259.4" r="1.35" fill="#d82a30"/>
<circle cx="828.4" cy="259.2" r="1.35" fill="#d82a30"/>
<circle cx="832.9" cy="259.3" r="1.35" fill="#d82a30"/>
<circle cx="837.3" cy="259.4" r="1.35" fill="#d82a30"/>
<circle cx="841.8" cy="259.8" r="1.35" fill="#d82a30"/>
<circle cx="846.3" cy="260.8" r="1.35" fill="#d82a30"/>
<circle cx="850.8" cy="261.6" r="1.35" fill="#d82a30"/>
<circle cx="855.2" cy="262.2" r="1.35" fill="#d82a30"/>
<rect x="25" y="338" width="830" height="2" fill="#1a1a9a"/>
<rect x="8" y="382" width="847" height="2" fill="#1a1a9a"/>
<line x1="11.5" y1="342.2" x2="15.3" y2="359.4" stroke="#f58a3d" stroke-width="1.1" stroke-linecap="round"/>
<line x1="15.3" y1="359.4" x2="19.1" y2="360.8" stroke="#f58a3d" stroke-width="1.1" stroke-linecap="round"/>
<line x1="19.1" y1="360.8" x2="24.8" y2="361.3" stroke="#f58a3d" stroke-width="1.1" stroke-linecap="round"/>
<line x1="24.8" y1="361.3" x2="28.6" y2="363.2" stroke="#f58a3d" stroke-width="1.1" stroke-linecap="round"/>
<line x1="28.6" y1="363.2" x2="32.5" y2="369" stroke="#f58a3d" stroke-width="1.1" stroke-linecap="round"/>
<line x1="32.5" y1="369" x2="36.3" y2="374.7" stroke="#f58a3d" stroke-width="1.1" stroke-linecap="round"/>
<line x1="36.3" y1="374.7" x2="40" y2="380" stroke="#f58a3d" stroke-width="1.1" stroke-linecap="round"/>
<line x1="40" y1="380" x2="44" y2="378" stroke="#f58a3d" stroke-width="1.1" stroke-linecap="round"/>
<line x1="44" y1="378" x2="45.8" y2="372.8" stroke="#f58a3d" stroke-width="1.1" stroke-linecap="round"/>
<line x1="45.8" y1="372.8" x2="48.7" y2="373.7" stroke="#f58a3d" stroke-width="1.1" stroke-linecap="round"/>
<line x1="48.7" y1="373.7" x2="55" y2="380" stroke="#f58a3d" stroke-width="1.1" stroke-linecap="round"/>
<line x1="55" y1="380" x2="65" y2="386" stroke="#22cc22" stroke-width="1.1" stroke-linecap="round"/>
<line x1="65" y1="386" x2="75" y2="388" stroke="#22cc22" stroke-width="1.1" stroke-linecap="round"/>
<line x1="75" y1="388" x2="82" y2="384" stroke="#22cc22" stroke-width="1.1" stroke-linecap="round"/>
<line x1="82" y1="384" x2="86.9" y2="374.7" stroke="#f58a3d" stroke-width="1.1" stroke-linecap="round"/>
<line x1="86.9" y1="374.7" x2="91.7" y2="363.2" stroke="#f58a3d" stroke-width="1.1" stroke-linecap="round"/>
<line x1="91.7" y1="363.2" x2="95.5" y2="360.8" stroke="#f58a3d" stroke-width="1.1" stroke-linecap="round"/>
<line x1="95.5" y1="360.8" x2="104.1" y2="361.3" stroke="#f58a3d" stroke-width="1.1" stroke-linecap="round"/>
<line x1="104.1" y1="361.3" x2="112.7" y2="367.1" stroke="#f58a3d" stroke-width="1.1" stroke-linecap="round"/>
<line x1="112.7" y1="367.1" x2="117.5" y2="364.2" stroke="#f58a3d" stroke-width="1.1" stroke-linecap="round"/>
<line x1="117.5" y1="364.2" x2="124.1" y2="368" stroke="#f58a3d" stroke-width="1.1" stroke-linecap="round"/>
<line x1="124.1" y1="368" x2="131.8" y2="369.5" stroke="#f58a3d" stroke-width="1.1" stroke-linecap="round"/>
<line x1="131.8" y1="369.5" x2="139.4" y2="374.7" stroke="#f58a3d" stroke-width="1.1" stroke-linecap="round"/>
<line x1="139.4" y1="374.7" x2="144.2" y2="369" stroke="#f58a3d" stroke-width="1.1" stroke-linecap="round"/>
<line x1="144.2" y1="369" x2="149" y2="384.3" stroke="#22cc22" stroke-width="1.1" stroke-linecap="round"/>
<line x1="149" y1="384.3" x2="154.7" y2="384.3" stroke="#22cc22" stroke-width="1.1" stroke-linecap="round"/>
<line x1="154.7" y1="384.3" x2="162.3" y2="390" stroke="#22cc22" stroke-width="1.1" stroke-linecap="round"/>
<line x1="162.3" y1="390" x2="168.1" y2="386.2" stroke="#22cc22" stroke-width="1.1" stroke-linecap="round"/>
<line x1="168.1" y1="386.2" x2="171.9" y2="389" stroke="#22cc22" stroke-width="1.1" stroke-linecap="round"/>
<line x1="171.9" y1="389" x2="179.5" y2="385.2" stroke="#22cc22" stroke-width="1.1" stroke-linecap="round"/>
<line x1="179.5" y1="385.2" x2="187.2" y2="390" stroke="#22cc22" stroke-width="1.1" stroke-linecap="round"/>
<line x1="187.2" y1="390" x2="198.6" y2="393.8" stroke="#22cc22" stroke-width="1.1" stroke-linecap="round"/>
<line x1="198.6" y1="393.8" x2="207.2" y2="395.1" stroke="#22cc22" stroke-width="1.1" stroke-linecap="round"/>
<line x1="207.2" y1="395.1" x2="212" y2="389" stroke="#22cc22" stroke-width="1.1" stroke-linecap="round"/>
<line x1="212" y1="389" x2="216.7" y2="374.7" stroke="#f58a3d" stroke-width="1.1" stroke-linecap="round"/>
<line x1="216.7" y1="374.7" x2="221.5" y2="376.6" stroke="#f58a3d" stroke-width="1.1" stroke-linecap="round"/>
<line x1="221.5" y1="376.6" x2="225.3" y2="376.6" stroke="#f58a3d" stroke-width="1.1" stroke-linecap="round"/>
<line x1="225.3" y1="376.6" x2="230.1" y2="371.5" stroke="#f58a3d" stroke-width="1.1" stroke-linecap="round"/>
<line x1="230.1" y1="371.5" x2="238.6" y2="376.6" stroke="#f58a3d" stroke-width="1.1" stroke-linecap="round"/>
<line x1="238.6" y1="376.6" x2="244.4" y2="370.3" stroke="#f58a3d" stroke-width="1.1" stroke-linecap="round"/>
<line x1="244.4" y1="370.3" x2="248.2" y2="372.2" stroke="#f58a3d" stroke-width="1.1" stroke-linecap="round"/>
<line x1="248.2" y1="372.2" x2="252" y2="369" stroke="#f58a3d" stroke-width="1.1" stroke-linecap="round"/>
<line x1="252" y1="369" x2="256.8" y2="359.4" stroke="#f58a3d" stroke-width="1.1" stroke-linecap="round"/>
<line x1="256.8" y1="359.4" x2="260.6" y2="362.3" stroke="#f58a3d" stroke-width="1.1" stroke-linecap="round"/>
<line x1="260.6" y1="362.3" x2="265.4" y2="360.4" stroke="#f58a3d" stroke-width="1.1" stroke-linecap="round"/>
<line x1="265.4" y1="360.4" x2="270.2" y2="350.4" stroke="#f58a3d" stroke-width="1.1" stroke-linecap="round"/>
<line x1="270.2" y1="350.4" x2="274.9" y2="353.7" stroke="#f58a3d" stroke-width="1.1" stroke-linecap="round"/>
<line x1="274.9" y1="353.7" x2="282.6" y2="346.1" stroke="#f58a3d" stroke-width="1.1" stroke-linecap="round"/>
<line x1="282.6" y1="346.1" x2="286.4" y2="347" stroke="#f58a3d" stroke-width="1.1" stroke-linecap="round"/>
<line x1="286.4" y1="347" x2="292.1" y2="353.7" stroke="#f58a3d" stroke-width="1.1" stroke-linecap="round"/>
<line x1="292.1" y1="353.7" x2="296.9" y2="363.2" stroke="#f58a3d" stroke-width="1.1" stroke-linecap="round"/>
<line x1="296.9" y1="363.2" x2="300.7" y2="362.7" stroke="#f58a3d" stroke-width="1.1" stroke-linecap="round"/>
<line x1="300.7" y1="362.7" x2="309.3" y2="355.6" stroke="#f58a3d" stroke-width="1.1" stroke-linecap="round"/>
<line x1="309.3" y1="355.6" x2="317" y2="360.4" stroke="#f58a3d" stroke-width="1.1" stroke-linecap="round"/>
<line x1="317" y1="360.4" x2="320.8" y2="361.3" stroke="#f58a3d" stroke-width="1.1" stroke-linecap="round"/>
<line x1="320.8" y1="361.3" x2="329.4" y2="366.5" stroke="#f58a3d" stroke-width="1.1" stroke-linecap="round"/>
<line x1="329.4" y1="366.5" x2="336" y2="364.6" stroke="#f58a3d" stroke-width="1.1" stroke-linecap="round"/>
<line x1="336" y1="364.6" x2="341.8" y2="366.5" stroke="#f58a3d" stroke-width="1.1" stroke-linecap="round"/>
<line x1="341.8" y1="366.5" x2="345.6" y2="361.3" stroke="#f58a3d" stroke-width="1.1" stroke-linecap="round"/>
<line x1="345.6" y1="361.3" x2="353.2" y2="365.2" stroke="#f58a3d" stroke-width="1.1" stroke-linecap="round"/>
<line x1="353.2" y1="365.2" x2="359.9" y2="375.3" stroke="#f58a3d" stroke-width="1.1" stroke-linecap="round"/>
<line x1="359.9" y1="375.3" x2="362.8" y2="370.9" stroke="#f58a3d" stroke-width="1.1" stroke-linecap="round"/>
<line x1="362.8" y1="370.9" x2="372.3" y2="370.9" stroke="#f58a3d" stroke-width="1.1" stroke-linecap="round"/>
<line x1="372.3" y1="370.9" x2="378.1" y2="372.8" stroke="#f58a3d" stroke-width="1.1" stroke-linecap="round"/>
<line x1="378.1" y1="372.8" x2="381.9" y2="366.5" stroke="#f58a3d" stroke-width="1.1" stroke-linecap="round"/>
<line x1="381.9" y1="366.5" x2="386.7" y2="369" stroke="#f58a3d" stroke-width="1.1" stroke-linecap="round"/>
<line x1="386.7" y1="369" x2="390.5" y2="345.1" stroke="#f58a3d" stroke-width="1.1" stroke-linecap="round"/>
<line x1="390.5" y1="345.1" x2="395.3" y2="344.1" stroke="#f58a3d" stroke-width="1.1" stroke-linecap="round"/>
<line x1="395.3" y1="344.1" x2="399.1" y2="350.8" stroke="#f58a3d" stroke-width="1.1" stroke-linecap="round"/>
<line x1="399.1" y1="350.8" x2="408.6" y2="361.3" stroke="#f58a3d" stroke-width="1.1" stroke-linecap="round"/>
<line x1="408.6" y1="361.3" x2="414.4" y2="364.2" stroke="#f58a3d" stroke-width="1.1" stroke-linecap="round"/>
<line x1="414.4" y1="364.2" x2="422" y2="366.5" stroke="#f58a3d" stroke-width="1.1" stroke-linecap="round"/>
<line x1="422" y1="366.5" x2="429.5" y2="362.3" stroke="#f58a3d" stroke-width="1.1" stroke-linecap="round"/>
<line x1="429.5" y1="362.3" x2="435.3" y2="369.5" stroke="#f58a3d" stroke-width="1.1" stroke-linecap="round"/>
<line x1="435.3" y1="369.5" x2="440.1" y2="366.1" stroke="#f58a3d" stroke-width="1.1" stroke-linecap="round"/>
<line x1="440.1" y1="366.1" x2="448.6" y2="372.2" stroke="#f58a3d" stroke-width="1.1" stroke-linecap="round"/>
<line x1="448.6" y1="372.2" x2="456.3" y2="367.1" stroke="#f58a3d" stroke-width="1.1" stroke-linecap="round"/>
<line x1="456.3" y1="367.1" x2="466.8" y2="354.6" stroke="#f58a3d" stroke-width="1.1" stroke-linecap="round"/>
<line x1="466.8" y1="354.6" x2="471.6" y2="356.9" stroke="#f58a3d" stroke-width="1.1" stroke-linecap="round"/>
<line x1="471.6" y1="356.9" x2="475.4" y2="356.2" stroke="#f58a3d" stroke-width="1.1" stroke-linecap="round"/>
<line x1="475.4" y1="356.2" x2="480.2" y2="360.4" stroke="#f58a3d" stroke-width="1.1" stroke-linecap="round"/>
<line x1="480.2" y1="360.4" x2="484.9" y2="368.4" stroke="#f58a3d" stroke-width="1.1" stroke-linecap="round"/>
<line x1="484.9" y1="368.4" x2="488.8" y2="370.3" stroke="#f58a3d" stroke-width="1.1" stroke-linecap="round"/>
<line x1="488.8" y1="370.3" x2="496.4" y2="379.9" stroke="#f58a3d" stroke-width="1.1" stroke-linecap="round"/>
<line x1="496.4" y1="379.9" x2="500.2" y2="381.4" stroke="#f58a3d" stroke-width="1.1" stroke-linecap="round"/>
<line x1="500.2" y1="381.4" x2="505.9" y2="381" stroke="#f58a3d" stroke-width="1.1" stroke-linecap="round"/>
<line x1="505.9" y1="381" x2="510.7" y2="382.9" stroke="#f58a3d" stroke-width="1.1" stroke-linecap="round"/>
<line x1="510.7" y1="382.9" x2="516.4" y2="381.8" stroke="#f58a3d" stroke-width="1.1" stroke-linecap="round"/>
<line x1="516.4" y1="381.8" x2="521.2" y2="384.3" stroke="#22cc22" stroke-width="1.1" stroke-linecap="round"/>
<line x1="521.2" y1="384.3" x2="526" y2="385.6" stroke="#22cc22" stroke-width="1.1" stroke-linecap="round"/>
<line x1="526" y1="385.6" x2="532.7" y2="381.8" stroke="#f58a3d" stroke-width="1.1" stroke-linecap="round"/>
<line x1="532.7" y1="381.8" x2="538.4" y2="385.6" stroke="#22cc22" stroke-width="1.1" stroke-linecap="round"/>
<line x1="538.4" y1="385.6" x2="546" y2="391.9" stroke="#22cc22" stroke-width="1.1" stroke-linecap="round"/>
<line x1="546" y1="391.9" x2="551.8" y2="392.8" stroke="#22cc22" stroke-width="1.1" stroke-linecap="round"/>
<line x1="551.8" y1="392.8" x2="555.6" y2="385.2" stroke="#22cc22" stroke-width="1.1" stroke-linecap="round"/>
<line x1="555.6" y1="385.2" x2="560.4" y2="383.3" stroke="#22cc22" stroke-width="1.1" stroke-linecap="round"/>
<line x1="560.4" y1="383.3" x2="565.1" y2="378" stroke="#f58a3d" stroke-width="1.1" stroke-linecap="round"/>
<line x1="565.1" y1="378" x2="569" y2="381.4" stroke="#f58a3d" stroke-width="1.1" stroke-linecap="round"/>
<line x1="569" y1="381.4" x2="573.7" y2="371.8" stroke="#f58a3d" stroke-width="1.1" stroke-linecap="round"/>
<line x1="573.7" y1="371.8" x2="580.4" y2="376" stroke="#f58a3d" stroke-width="1.1" stroke-linecap="round"/>
<line x1="580.4" y1="376" x2="588.1" y2="376.6" stroke="#f58a3d" stroke-width="1.1" stroke-linecap="round"/>
<line x1="588.1" y1="376.6" x2="591.9" y2="379.5" stroke="#f58a3d" stroke-width="1.1" stroke-linecap="round"/>
<line x1="591.9" y1="379.5" x2="596.7" y2="371.5" stroke="#f58a3d" stroke-width="1.1" stroke-linecap="round"/>
<line x1="596.7" y1="371.5" x2="605.3" y2="377.2" stroke="#f58a3d" stroke-width="1.1" stroke-linecap="round"/>
<line x1="605.3" y1="377.2" x2="610" y2="374.1" stroke="#f58a3d" stroke-width="1.1" stroke-linecap="round"/>
<line x1="610" y1="374.1" x2="614.8" y2="376" stroke="#f58a3d" stroke-width="1.1" stroke-linecap="round"/>
<line x1="614.8" y1="376" x2="620.5" y2="382.3" stroke="#f58a3d" stroke-width="1.1" stroke-linecap="round"/>
<line x1="620.5" y1="382.3" x2="630.1" y2="386.7" stroke="#22cc22" stroke-width="1.1" stroke-linecap="round"/>
<line x1="630.1" y1="386.7" x2="635.7" y2="384.3" stroke="#22cc22" stroke-width="1.1" stroke-linecap="round"/>
<line x1="635.7" y1="384.3" x2="641.5" y2="385.6" stroke="#22cc22" stroke-width="1.1" stroke-linecap="round"/>
<line x1="641.5" y1="385.6" x2="645.3" y2="369.5" stroke="#f58a3d" stroke-width="1.1" stroke-linecap="round"/>
<line x1="645.3" y1="369.5" x2="649.1" y2="375.3" stroke="#f58a3d" stroke-width="1.1" stroke-linecap="round"/>
<line x1="649.1" y1="375.3" x2="653.9" y2="366.1" stroke="#f58a3d" stroke-width="1.1" stroke-linecap="round"/>
<line x1="653.9" y1="366.1" x2="658.6" y2="370.9" stroke="#f58a3d" stroke-width="1.1" stroke-linecap="round"/>
<line x1="658.6" y1="370.9" x2="663.4" y2="371.5" stroke="#f58a3d" stroke-width="1.1" stroke-linecap="round"/>
<line x1="663.4" y1="371.5" x2="667.2" y2="373.7" stroke="#f58a3d" stroke-width="1.1" stroke-linecap="round"/>
<line x1="667.2" y1="373.7" x2="671.1" y2="370.9" stroke="#f58a3d" stroke-width="1.1" stroke-linecap="round"/>
<line x1="671.1" y1="370.9" x2="676.8" y2="361.3" stroke="#f58a3d" stroke-width="1.1" stroke-linecap="round"/>
<line x1="676.8" y1="361.3" x2="683.5" y2="354.3" stroke="#f58a3d" stroke-width="1.1" stroke-linecap="round"/>
<line x1="683.5" y1="354.3" x2="691.1" y2="356.2" stroke="#f58a3d" stroke-width="1.1" stroke-linecap="round"/>
<line x1="691.1" y1="356.2" x2="698.8" y2="353.1" stroke="#f58a3d" stroke-width="1.1" stroke-linecap="round"/>
<line x1="698.8" y1="353.1" x2="704.5" y2="360" stroke="#f58a3d" stroke-width="1.1" stroke-linecap="round"/>
<line x1="704.5" y1="360" x2="712.1" y2="362.3" stroke="#f58a3d" stroke-width="1.1" stroke-linecap="round"/>
<line x1="712.1" y1="362.3" x2="717.9" y2="360.4" stroke="#f58a3d" stroke-width="1.1" stroke-linecap="round"/>
<line x1="717.9" y1="360.4" x2="725.5" y2="366.5" stroke="#f58a3d" stroke-width="1.1" stroke-linecap="round"/>
<line x1="725.5" y1="366.5" x2="735" y2="345.1" stroke="#f58a3d" stroke-width="1.1" stroke-linecap="round"/>
<line x1="735" y1="345.1" x2="742.7" y2="346.1" stroke="#f58a3d" stroke-width="1.1" stroke-linecap="round"/>
<line x1="742.7" y1="346.1" x2="749.4" y2="350.4" stroke="#f58a3d" stroke-width="1.1" stroke-linecap="round"/>
<line x1="749.4" y1="350.4" x2="756" y2="344.7" stroke="#f58a3d" stroke-width="1.1" stroke-linecap="round"/>
<line x1="756" y1="344.7" x2="763.7" y2="335.9" stroke="#cc33cc" stroke-width="1.1" stroke-linecap="round"/>
<line x1="763.7" y1="335.9" x2="767.5" y2="334" stroke="#cc33cc" stroke-width="1.1" stroke-linecap="round"/>
<line x1="767.5" y1="334" x2="775.2" y2="337.5" stroke="#cc33cc" stroke-width="1.1" stroke-linecap="round"/>
<line x1="775.2" y1="337.5" x2="780.9" y2="334.6" stroke="#cc33cc" stroke-width="1.1" stroke-linecap="round"/>
<line x1="780.9" y1="334.6" x2="786.6" y2="334.6" stroke="#cc33cc" stroke-width="1.1" stroke-linecap="round"/>
<line x1="786.6" y1="334.6" x2="798.1" y2="344.7" stroke="#f58a3d" stroke-width="1.1" stroke-linecap="round"/>
<line x1="798.1" y1="344.7" x2="805.7" y2="341.3" stroke="#f58a3d" stroke-width="1.1" stroke-linecap="round"/>
<line x1="805.7" y1="341.3" x2="815.3" y2="331.3" stroke="#cc33cc" stroke-width="1.1" stroke-linecap="round"/>
<line x1="815.3" y1="331.3" x2="821" y2="335.2" stroke="#cc33cc" stroke-width="1.1" stroke-linecap="round"/>
<line x1="821" y1="335.2" x2="824.8" y2="334" stroke="#cc33cc" stroke-width="1.1" stroke-linecap="round"/>
<line x1="824.8" y1="334" x2="832.4" y2="350.8" stroke="#f58a3d" stroke-width="1.1" stroke-linecap="round"/>
<line x1="832.4" y1="350.8" x2="838.2" y2="354.6" stroke="#f58a3d" stroke-width="1.1" stroke-linecap="round"/>
<line x1="838.2" y1="354.6" x2="843" y2="347" stroke="#f58a3d" stroke-width="1.1" stroke-linecap="round"/>
<line x1="843" y1="347" x2="850" y2="348.9" stroke="#f58a3d" stroke-width="1.1" stroke-linecap="round"/>
<line x1="850" y1="348.9" x2="855" y2="352.7" stroke="#f58a3d" stroke-width="1.1" stroke-linecap="round"/>
<rect x="7.5" y="38.5" width="876.0" height="211.0" fill="none" stroke="#a9b9c9" stroke-width="1"/>
<rect x="7.5" y="255.5" width="876.0" height="67.0" fill="none" stroke="#a9b9c9" stroke-width="1"/>
<rect x="7.5" y="328.5" width="876.0" height="70.0" fill="none" stroke="#a9b9c9" stroke-width="1"/>
<line x1="19.5" y1="399" x2="19.5" y2="402" stroke="#a9b9c9" stroke-width="1"/>
<line x1="46.5" y1="399" x2="46.5" y2="402" stroke="#a9b9c9" stroke-width="1"/>
<line x1="73.5" y1="399" x2="73.5" y2="402" stroke="#a9b9c9" stroke-width="1"/>
<line x1="99.5" y1="399" x2="99.5" y2="402" stroke="#a9b9c9" stroke-width="1"/>
<line x1="126.5" y1="399" x2="126.5" y2="402" stroke="#a9b9c9" stroke-width="1"/>
<line x1="153.5" y1="399" x2="153.5" y2="402" stroke="#a9b9c9" stroke-width="1"/>
<line x1="180.5" y1="399" x2="180.5" y2="402" stroke="#a9b9c9" stroke-width="1"/>
<line x1="207.5" y1="399" x2="207.5" y2="402" stroke="#a9b9c9" stroke-width="1"/>
<line x1="234.5" y1="399" x2="234.5" y2="402" stroke="#a9b9c9" stroke-width="1"/>
<line x1="260.5" y1="399" x2="260.5" y2="402" stroke="#a9b9c9" stroke-width="1"/>
<line x1="287.5" y1="399" x2="287.5" y2="402" stroke="#a9b9c9" stroke-width="1"/>
<line x1="314.5" y1="399" x2="314.5" y2="402" stroke="#a9b9c9" stroke-width="1"/>
<line x1="341.5" y1="399" x2="341.5" y2="402" stroke="#a9b9c9" stroke-width="1"/>
<line x1="368.5" y1="399" x2="368.5" y2="402" stroke="#a9b9c9" stroke-width="1"/>
<line x1="394.5" y1="399" x2="394.5" y2="402" stroke="#a9b9c9" stroke-width="1"/>
<line x1="421.5" y1="399" x2="421.5" y2="402" stroke="#a9b9c9" stroke-width="1"/>
<line x1="448.5" y1="399" x2="448.5" y2="402" stroke="#a9b9c9" stroke-width="1"/>
<line x1="475.5" y1="399" x2="475.5" y2="402" stroke="#a9b9c9" stroke-width="1"/>
<line x1="502.5" y1="399" x2="502.5" y2="402" stroke="#a9b9c9" stroke-width="1"/>
<line x1="529.5" y1="399" x2="529.5" y2="402" stroke="#a9b9c9" stroke-width="1"/>
<line x1="555.5" y1="399" x2="555.5" y2="402" stroke="#a9b9c9" stroke-width="1"/>
<line x1="582.5" y1="399" x2="582.5" y2="402" stroke="#a9b9c9" stroke-width="1"/>
<line x1="609.5" y1="399" x2="609.5" y2="402" stroke="#a9b9c9" stroke-width="1"/>
<line x1="636.5" y1="399" x2="636.5" y2="402" stroke="#a9b9c9" stroke-width="1"/>
<line x1="663.5" y1="399" x2="663.5" y2="402" stroke="#a9b9c9" stroke-width="1"/>
<line x1="690.5" y1="399" x2="690.5" y2="402" stroke="#a9b9c9" stroke-width="1"/>
<line x1="716.5" y1="399" x2="716.5" y2="402" stroke="#a9b9c9" stroke-width="1"/>
<line x1="743.5" y1="399" x2="743.5" y2="402" stroke="#a9b9c9" stroke-width="1"/>
<line x1="770.5" y1="399" x2="770.5" y2="402" stroke="#a9b9c9" stroke-width="1"/>
<line x1="797.5" y1="399" x2="797.5" y2="402" stroke="#a9b9c9" stroke-width="1"/>
<line x1="824.5" y1="399" x2="824.5" y2="402" stroke="#a9b9c9" stroke-width="1"/>
<line x1="850.5" y1="399" x2="850.5" y2="402" stroke="#a9b9c9" stroke-width="1"/>
<line x1="877.5" y1="399" x2="877.5" y2="402" stroke="#a9b9c9" stroke-width="1"/>
<text x="19.5" y="421" font-size="11" fill="#eef0f2" stroke="#eef0f2" stroke-width="0.25" text-anchor="middle">26</text>
<text x="46.3" y="421" font-size="11" fill="#eef0f2" stroke="#eef0f2" stroke-width="0.25" text-anchor="middle">1</text>
<text x="73.1" y="421" font-size="11" fill="#eef0f2" stroke="#eef0f2" stroke-width="0.25" text-anchor="middle">2</text>
<text x="100.0" y="421" font-size="11" fill="#eef0f2" stroke="#eef0f2" stroke-width="0.25" text-anchor="middle">3</text>
<text x="126.8" y="421" font-size="11" fill="#eef0f2" stroke="#eef0f2" stroke-width="0.25" text-anchor="middle">4</text>
<text x="153.6" y="421" font-size="11" fill="#eef0f2" stroke="#eef0f2" stroke-width="0.25" text-anchor="middle">5</text>
<text x="180.4" y="421" font-size="11" fill="#eef0f2" stroke="#eef0f2" stroke-width="0.25" text-anchor="middle">8</text>
<text x="207.2" y="421" font-size="11" fill="#eef0f2" stroke="#eef0f2" stroke-width="0.25" text-anchor="middle">9</text>
<text x="234.1" y="421" font-size="11" fill="#eef0f2" stroke="#eef0f2" stroke-width="0.25" text-anchor="middle">10</text>
<text x="260.9" y="421" font-size="11" fill="#eef0f2" stroke="#eef0f2" stroke-width="0.25" text-anchor="middle">11</text>
<text x="287.7" y="421" font-size="11" fill="#eef0f2" stroke="#eef0f2" stroke-width="0.25" text-anchor="middle">12</text>
<text x="314.5" y="421" font-size="11" fill="#eef0f2" stroke="#eef0f2" stroke-width="0.25" text-anchor="middle">15</text>
<text x="341.3" y="421" font-size="11" fill="#eef0f2" stroke="#eef0f2" stroke-width="0.25" text-anchor="middle">16</text>
<text x="368.2" y="421" font-size="11" fill="#eef0f2" stroke="#eef0f2" stroke-width="0.25" text-anchor="middle">17</text>
<text x="395.0" y="421" font-size="11" fill="#eef0f2" stroke="#eef0f2" stroke-width="0.25" text-anchor="middle">18</text>
<text x="421.8" y="421" font-size="11" fill="#eef0f2" stroke="#eef0f2" stroke-width="0.25" text-anchor="middle">19</text>
<text x="448.6" y="421" font-size="11" fill="#eef0f2" stroke="#eef0f2" stroke-width="0.25" text-anchor="middle">22</text>
<text x="475.4" y="421" font-size="11" fill="#eef0f2" stroke="#eef0f2" stroke-width="0.25" text-anchor="middle">23</text>
<text x="502.3" y="421" font-size="11" fill="#eef0f2" stroke="#eef0f2" stroke-width="0.25" text-anchor="middle">24</text>
<text x="529.1" y="421" font-size="11" fill="#eef0f2" stroke="#eef0f2" stroke-width="0.25" text-anchor="middle">25</text>
<text x="555.9" y="421" font-size="11" fill="#eef0f2" stroke="#eef0f2" stroke-width="0.25" text-anchor="middle">26</text>
<text x="582.7" y="421" font-size="11" fill="#eef0f2" stroke="#eef0f2" stroke-width="0.25" text-anchor="middle">29</text>
<text x="609.5" y="421" font-size="11" fill="#eef0f2" stroke="#eef0f2" stroke-width="0.25" text-anchor="middle">30</text>
<text x="636.4" y="421" font-size="11" fill="#eef0f2" stroke="#eef0f2" stroke-width="0.25" text-anchor="middle">31</text>
<text x="663.2" y="421" font-size="11" fill="#eef0f2" stroke="#eef0f2" stroke-width="0.25" text-anchor="middle">1</text>
<text x="690.0" y="421" font-size="11" fill="#eef0f2" stroke="#eef0f2" stroke-width="0.25" text-anchor="middle">2</text>
<text x="716.8" y="421" font-size="11" fill="#eef0f2" stroke="#eef0f2" stroke-width="0.25" text-anchor="middle">5</text>
<text x="743.6" y="421" font-size="11" fill="#eef0f2" stroke="#eef0f2" stroke-width="0.25" text-anchor="middle">6</text>
<text x="770.5" y="421" font-size="11" fill="#eef0f2" stroke="#eef0f2" stroke-width="0.25" text-anchor="middle">7</text>
<text x="797.3" y="421" font-size="11" fill="#eef0f2" stroke="#eef0f2" stroke-width="0.25" text-anchor="middle">8</text>
<text x="824.1" y="421" font-size="11" fill="#eef0f2" stroke="#eef0f2" stroke-width="0.25" text-anchor="middle">9</text>
<text x="850.9" y="421" font-size="11" fill="#eef0f2" stroke="#eef0f2" stroke-width="0.25" text-anchor="middle">12</text>
<text x="877.7" y="421" font-size="11" fill="#eef0f2" stroke="#eef0f2" stroke-width="0.25" text-anchor="middle">13</text>
<line x1="883" y1="66.5" x2="887" y2="66.5" stroke="#a9b9c9" stroke-width="1"/>
<text x="890.5" y="72.5" font-size="11" fill="#f2f2f2" stroke="#f2f2f2" stroke-width="0.35">1.2200</text>
<line x1="883" y1="98.5" x2="887" y2="98.5" stroke="#a9b9c9" stroke-width="1"/>
<text x="890.5" y="104.5" font-size="11" fill="#f2f2f2" stroke="#f2f2f2" stroke-width="0.35">1.2100</text>
<line x1="883" y1="130.5" x2="887" y2="130.5" stroke="#a9b9c9" stroke-width="1"/>
<text x="890.5" y="136.5" font-size="11" fill="#f2f2f2" stroke="#f2f2f2" stroke-width="0.35">1.2000</text>
<line x1="883" y1="193.5" x2="887" y2="193.5" stroke="#a9b9c9" stroke-width="1"/>
<text x="890.5" y="199.5" font-size="11" fill="#f2f2f2" stroke="#f2f2f2" stroke-width="0.35">1.1800</text>
<line x1="883" y1="225.5" x2="887" y2="225.5" stroke="#a9b9c9" stroke-width="1"/>
<text x="890.5" y="231.5" font-size="11" fill="#f2f2f2" stroke="#f2f2f2" stroke-width="0.35">1.1700</text>
<line x1="883" y1="279.5" x2="887" y2="279.5" stroke="#a9b9c9" stroke-width="1"/>
<text x="891" y="286.0" font-size="11" fill="#f2f2f2" stroke="#f2f2f2" stroke-width="0.35">+0.000</text>
<line x1="883" y1="314.5" x2="887" y2="314.5" stroke="#a9b9c9" stroke-width="1"/>
<text x="891" y="321.0" font-size="11" fill="#f2f2f2" stroke="#f2f2f2" stroke-width="0.35">-0.005</text>
<line x1="883" y1="360.5" x2="887" y2="360.5" stroke="#a9b9c9" stroke-width="1"/>
<text x="891" y="367" font-size="11" fill="#f2f2f2" stroke="#f2f2f2" stroke-width="0.35">50</text>
<rect x="883" y="156" width="48" height="21" fill="#ffffff"/>
<text x="908.5" y="170.5" font-size="11" fill="#50565f" text-anchor="middle">1.1885</text>
<text x="9" y="50" font-size="10" fill="#e8201c">Exponential_Moving_Average</text>
<text x="147" y="50" font-size="10" fill="#2a22e0">Exponential_Moving_Average</text>
<rect x="7" y="38" width="31" height="22" fill="#f0f0f0"/>
<rect x="7" y="38" width="31" height="5" fill="#d4d4d4"/>
<defs><linearGradient id="gr" x1="0" y1="0" x2="0" y2="1"><stop offset="0" stop-color="#ff6a6a"/><stop offset="1" stop-color="#c8202a"/></linearGradient><linearGradient id="gb" x1="0" y1="0" x2="0" y2="1"><stop offset="0" stop-color="#40b8f0"/><stop offset="1" stop-color="#1a78c8"/></linearGradient></defs>
<rect x="11.5" y="46.5" width="9" height="9" rx="2" fill="url(#gr)" stroke="#a01420" stroke-width="1"/>
<rect x="24.5" y="46.5" width="9" height="9" rx="2" fill="url(#gb)" stroke="#1860a0" stroke-width="1"/>
<text x="10" y="267" font-size="11" fill="#161660" textLength="27" lengthAdjust="spacingAndGlyphs">MACD</text>
<text x="9.5" y="339.7" font-size="11" fill="#f08030" textLength="15" lengthAdjust="spacingAndGlyphs">RSI</text>
<rect x="8.5" y="375.5" width="38" height="19" rx="2" fill="#5b6b80" stroke="#a2b6c6" stroke-width="1"/>
<text x="16" y="389" font-size="11" fill="#f0f4f8" stroke="#f0f4f8" stroke-width="0.3" letter-spacing="-0.4">Фев 2021</text>
<rect x="47.5" y="375.5" width="62" height="19" rx="2" fill="#5b6b80" stroke="#a2b6c6" stroke-width="1"/>
<text x="54" y="389" font-size="11" fill="#f0f4f8" stroke="#f0f4f8" stroke-width="0.3" letter-spacing="0">Мар 2021</text>
<rect x="663.5" y="375.5" width="62" height="19" rx="2" fill="#5b6b80" stroke="#a2b6c6" stroke-width="1"/>
<text x="671" y="389" font-size="11" fill="#f0f4f8" stroke="#f0f4f8" stroke-width="0.3" letter-spacing="0">Апр 2021</text>
<rect x="7" y="375" width="2" height="28" fill="#c8e6e4"/>
<rect x="46" y="375" width="2" height="28" fill="#c8e6e4"/>
<rect x="663" y="375" width="2" height="28" fill="#c8e6e4"/>
</svg>
</body></html>
